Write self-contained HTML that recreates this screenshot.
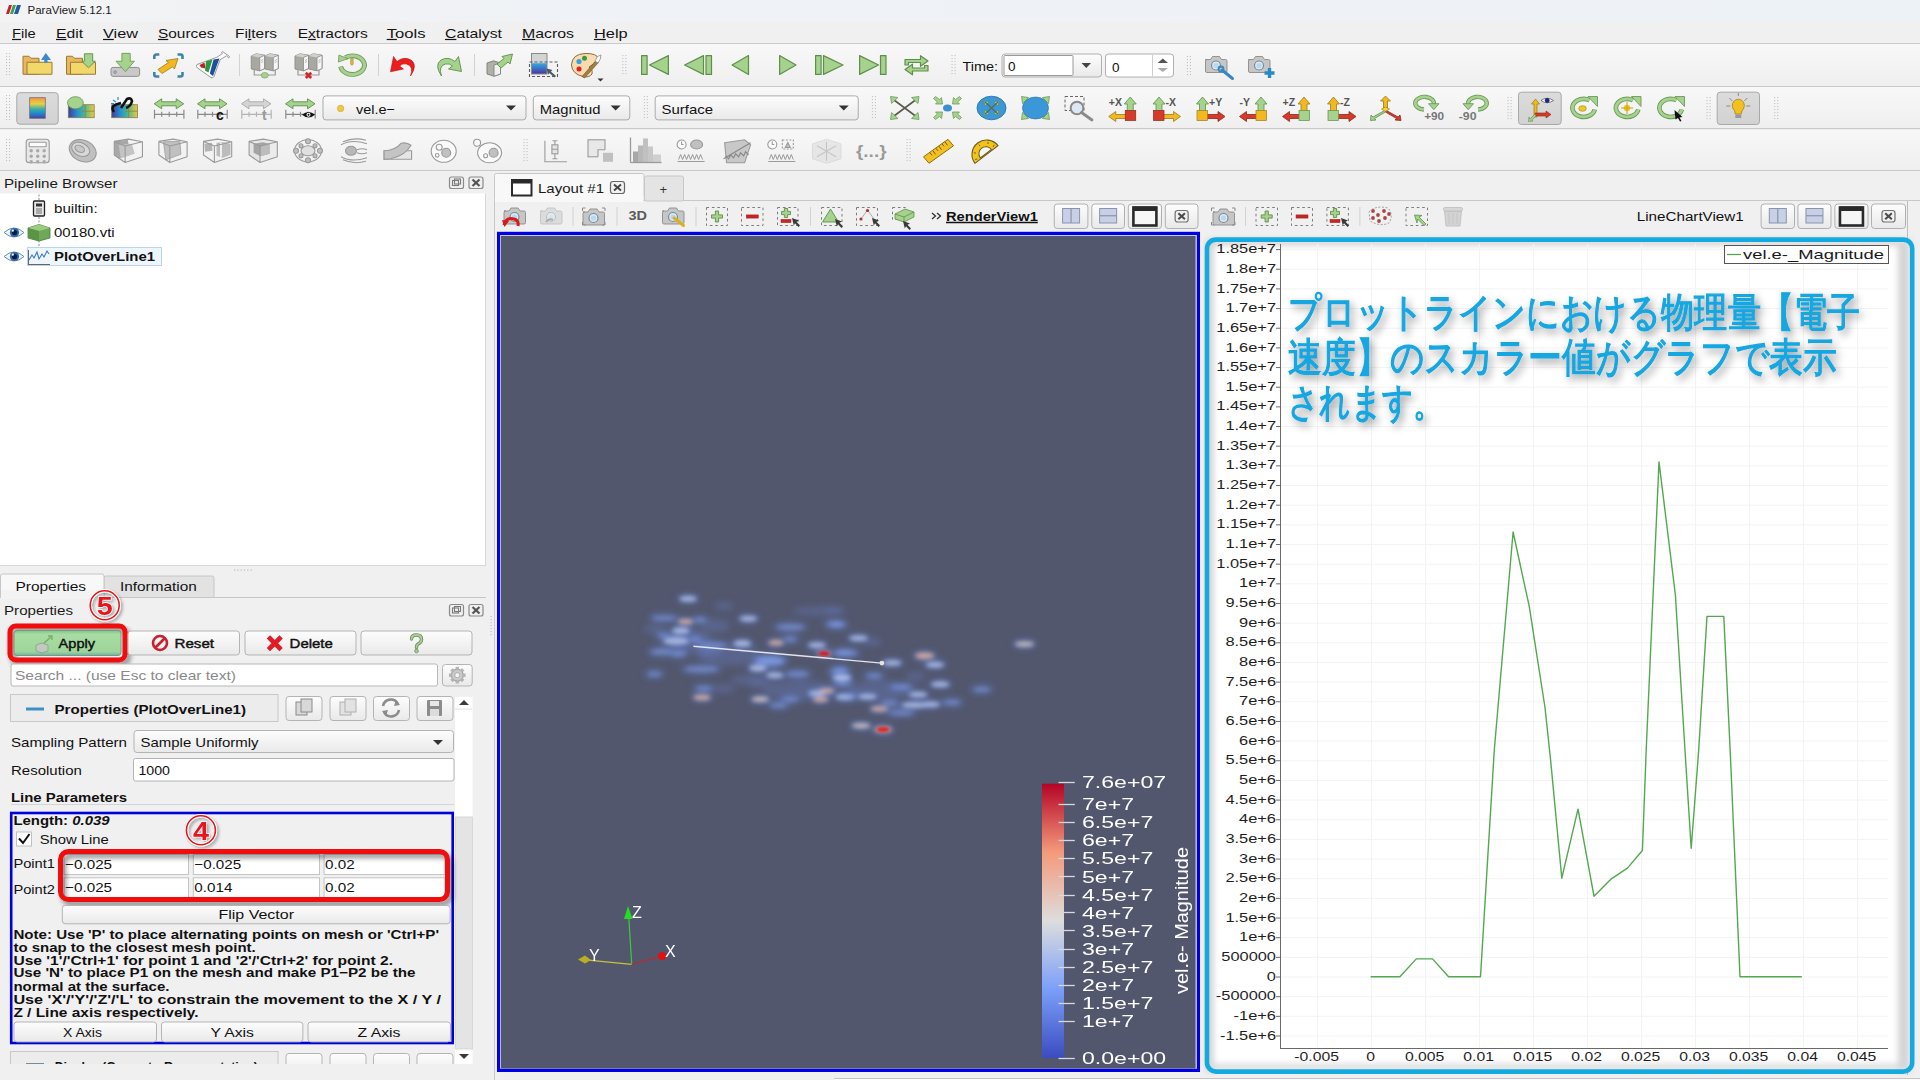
<!DOCTYPE html>
<html lang="ja"><head><meta charset="utf-8"><title>ParaView</title>
<style>html,body{margin:0;padding:0;width:1920px;height:1080px;overflow:hidden;background:#f0f0f0}
svg{display:block;font-family:"Liberation Sans", sans-serif}</style></head>
<body><svg width="1920" height="1080" viewBox="0 0 1920 1080">
<defs>
 <linearGradient id="tb" x1="0" y1="0" x2="0" y2="1"><stop offset="0" stop-color="#f8f8f8"/><stop offset="1" stop-color="#efefef"/></linearGradient>
 <linearGradient id="title" x1="0" y1="0" x2="1" y2="0"><stop offset="0" stop-color="#f3f3f4"/><stop offset="0.3" stop-color="#eff2f6"/><stop offset="1" stop-color="#edf2f7"/></linearGradient>
 <linearGradient id="btn" x1="0" y1="0" x2="0" y2="1"><stop offset="0" stop-color="#fdfdfd"/><stop offset="1" stop-color="#e9e9e9"/></linearGradient>
 <linearGradient id="btnact" x1="0" y1="0" x2="0" y2="1"><stop offset="0" stop-color="#dcdcdc"/><stop offset="1" stop-color="#d2d2d2"/></linearGradient>
 <linearGradient id="apply" x1="0" y1="0" x2="0" y2="1"><stop offset="0" stop-color="#7fc28a"/><stop offset="0.15" stop-color="#a8dca2"/><stop offset="0.85" stop-color="#9fd59a"/><stop offset="1" stop-color="#6eb0a8"/></linearGradient>
 <linearGradient id="cmap" x1="0" y1="1" x2="0" y2="0">
   <stop offset="0" stop-color="#3b4cc0"/><stop offset="0.25" stop-color="#7b9ff9"/><stop offset="0.5" stop-color="#dddddd"/><stop offset="0.75" stop-color="#f49a7b"/><stop offset="1" stop-color="#b40426"/>
 </linearGradient>
 <filter id="blur4" x="-50%" y="-50%" width="200%" height="200%"><feGaussianBlur stdDeviation="4"/></filter>
 <filter id="blur3" x="-50%" y="-50%" width="200%" height="200%"><feGaussianBlur stdDeviation="3"/></filter>
 <filter id="blur2" x="-50%" y="-50%" width="200%" height="200%"><feGaussianBlur stdDeviation="2"/></filter>
 <filter id="blur1" x="-50%" y="-50%" width="200%" height="200%"><feGaussianBlur stdDeviation="1"/></filter>
 <filter id="shadow" x="-10%" y="-10%" width="130%" height="140%"><feGaussianBlur in="SourceAlpha" stdDeviation="2.5"/><feOffset dx="3" dy="4" result="o"/><feComponentTransfer><feFuncA type="linear" slope="0.45"/></feComponentTransfer><feMerge><feMergeNode/><feMergeNode in="SourceGraphic"/></feMerge></filter>
 <filter id="shadow2" x="-30%" y="-30%" width="160%" height="160%"><feGaussianBlur in="SourceAlpha" stdDeviation="1.5"/><feOffset dx="1.5" dy="2" result="o"/><feComponentTransfer><feFuncA type="linear" slope="0.3"/></feComponentTransfer><feMerge><feMergeNode/><feMergeNode in="SourceGraphic"/></feMerge></filter>
 <filter id="shadowj" x="-10%" y="-30%" width="130%" height="170%"><feGaussianBlur in="SourceAlpha" stdDeviation="4"/><feOffset dx="3" dy="4" result="o"/><feComponentTransfer><feFuncA type="linear" slope="0.42"/></feComponentTransfer><feMerge><feMergeNode/><feMergeNode in="SourceGraphic"/></feMerge></filter>
 <filter id="ishadow" x="-5%" y="-5%" width="110%" height="110%"><feGaussianBlur stdDeviation="3"/></filter>
</defs>
<rect x="0" y="0" width="1920" height="1080" fill="#f0f0f0" /><rect x="0" y="0" width="1920" height="22" fill="url(#title)" /><g transform="translate(6,5)"><path d="M3 0h3l-3 9h-3z" fill="#c8202f"/><path d="M7 0h3l-3 9h-3z" fill="#3aa14a"/><path d="M11 0h4l-3 9h-4z" fill="#1f5aa8"/></g><text x="27.5" y="13.5" font-size="11.5" fill="#1a1a1a" textLength="84.14" lengthAdjust="spacingAndGlyphs" >ParaView 5.12.1</text><rect x="0" y="22" width="1920" height="22" fill="#f0f0f0" /><text x="12" y="37.5" font-size="13.5" fill="#141414" textLength="23.70" lengthAdjust="spacingAndGlyphs" >File</text><line x1="12" y1="39.5" x2="20.98320172290022" y2="39.5" stroke="#141414" stroke-width="1.2" /><text x="56" y="37.5" font-size="13.5" fill="#141414" textLength="27.00" lengthAdjust="spacingAndGlyphs" >Edit</text><line x1="56" y1="39.5" x2="66.44459368703828" y2="39.5" stroke="#141414" stroke-width="1.2" /><text x="103" y="37.5" font-size="13.5" fill="#141414" textLength="35.00" lengthAdjust="spacingAndGlyphs" >View</text><line x1="103" y1="39.5" x2="113.8562197092084" y2="39.5" stroke="#141414" stroke-width="1.2" /><text x="158" y="37.5" font-size="13.5" fill="#141414" textLength="56.50" lengthAdjust="spacingAndGlyphs" >Sources</text><line x1="158" y1="39.5" x2="168.26300851466414" y2="39.5" stroke="#141414" stroke-width="1.2" /><text x="235" y="37.5" font-size="13.5" fill="#141414" textLength="42.00" lengthAdjust="spacingAndGlyphs" >Filters</text><line x1="247.8516787080323" y1="39.5" x2="251.27879303017426" y2="39.5" stroke="#141414" stroke-width="1.2" /><text x="297.7" y="37.5" font-size="13.5" fill="#141414" textLength="70.10" lengthAdjust="spacingAndGlyphs" >Extractors</text><line x1="308.07984575835474" y1="39.5" x2="315.8647300771208" y2="39.5" stroke="#141414" stroke-width="1.2" /><text x="386.7" y="37.5" font-size="13.5" fill="#141414" textLength="38.90" lengthAdjust="spacingAndGlyphs" >Tools</text><line x1="386.7" y1="39.5" x2="396.87799801783945" y2="39.5" stroke="#141414" stroke-width="1.2" /><text x="445" y="37.5" font-size="13.5" fill="#141414" textLength="57.00" lengthAdjust="spacingAndGlyphs" >Catalyst</text><line x1="445" y1="39.5" x2="456.39269698910954" y2="39.5" stroke="#141414" stroke-width="1.2" /><text x="522" y="37.5" font-size="13.5" fill="#141414" textLength="52.00" lengthAdjust="spacingAndGlyphs" >Macros</text><line x1="522" y1="39.5" x2="535.2110091743119" y2="39.5" stroke="#141414" stroke-width="1.2" /><text x="594" y="37.5" font-size="13.5" fill="#141414" textLength="33.70" lengthAdjust="spacingAndGlyphs" >Help</text><line x1="594" y1="39.5" x2="605.8272215973003" y2="39.5" stroke="#141414" stroke-width="1.2" /><line x1="0" y1="43.5" x2="1920" y2="43.5" stroke="#cacaca" stroke-width="1" /><rect x="0" y="44" width="1920" height="42" fill="url(#tb)" /><rect x="0" y="87" width="1920" height="41.5" fill="url(#tb)" /><rect x="0" y="129" width="1920" height="41" fill="url(#tb)" /><line x1="0" y1="86.5" x2="1920" y2="86.5" stroke="#c9c9c9" stroke-width="1.2" /><line x1="0" y1="128.7" x2="1920" y2="128.7" stroke="#c9c9c9" stroke-width="1.2" /><line x1="0" y1="170.5" x2="1920" y2="170.5" stroke="#c9c9c9" stroke-width="1.2" /><text x="4" y="188" font-size="13.5" fill="#1a1a1a" textLength="113.51" lengthAdjust="spacingAndGlyphs" >Pipeline Browser</text><rect x="449.5" y="177" width="14" height="11.5" fill="#f0f0f0" stroke="#8a8a8a" stroke-width="1.2" rx="2" /><rect x="452.5" y="180.5" width="6" height="5" fill="none" stroke="#7a7a7a" stroke-width="1.1" /><rect x="454.5" y="179" width="6" height="5" fill="none" stroke="#7a7a7a" stroke-width="1.1" /><rect x="469" y="177" width="14" height="11.5" fill="#f0f0f0" stroke="#8a8a8a" stroke-width="1.2" rx="2" /><line x1="472.5" y1="179.5" x2="479.5" y2="186" stroke="#555" stroke-width="2.2" /><line x1="479.5" y1="179.5" x2="472.5" y2="186" stroke="#555" stroke-width="2.2" /><rect x="0" y="193.5" width="485" height="371.5" fill="#ffffff" /><line x1="485.5" y1="193.5" x2="485.5" y2="565" stroke="#d8d8d8" stroke-width="1" /><line x1="0" y1="565.5" x2="486" y2="565.5" stroke="#d8d8d8" stroke-width="1" /><rect x="234.0" y="569.5" width="1.2" height="1.2" fill="#b8b8b8" /><rect x="237.3" y="569.5" width="1.2" height="1.2" fill="#b8b8b8" /><rect x="240.6" y="569.5" width="1.2" height="1.2" fill="#b8b8b8" /><rect x="243.9" y="569.5" width="1.2" height="1.2" fill="#b8b8b8" /><rect x="247.2" y="569.5" width="1.2" height="1.2" fill="#b8b8b8" /><rect x="250.5" y="569.5" width="1.2" height="1.2" fill="#b8b8b8" /><line x1="0" y1="597.5" x2="486" y2="597.5" stroke="#c6c6c6" stroke-width="1" /><rect x="104" y="576" width="110" height="21.5" fill="#e2e2e2" stroke="#c6c6c6" stroke-width="1" rx="2" /><rect x="0.5" y="574" width="103.5" height="24" fill="#f8f8f8" stroke="#c6c6c6" stroke-width="1" rx="2" /><rect x="1" y="590" width="102" height="9" fill="#f3f3f3" /><text x="15.4" y="591" font-size="13" fill="#111" textLength="70.60" lengthAdjust="spacingAndGlyphs" >Properties</text><text x="120" y="591" font-size="13" fill="#111" textLength="76.70" lengthAdjust="spacingAndGlyphs" >Information</text><text x="4" y="615.4" font-size="13.5" fill="#1a1a1a" textLength="68.95" lengthAdjust="spacingAndGlyphs" >Properties</text><rect x="449.5" y="604.5" width="14" height="11.5" fill="#f0f0f0" stroke="#8a8a8a" stroke-width="1.2" rx="2" /><rect x="452.5" y="608.0" width="6" height="5" fill="none" stroke="#7a7a7a" stroke-width="1.1" /><rect x="454.5" y="606.5" width="6" height="5" fill="none" stroke="#7a7a7a" stroke-width="1.1" /><rect x="469" y="604.5" width="14" height="11.5" fill="#f0f0f0" stroke="#8a8a8a" stroke-width="1.2" rx="2" /><line x1="472.5" y1="607.0" x2="479.5" y2="613.5" stroke="#555" stroke-width="2.2" /><line x1="479.5" y1="607.0" x2="472.5" y2="613.5" stroke="#555" stroke-width="2.2" /><line x1="494" y1="200.5" x2="1920" y2="200.5" stroke="#c8c8c8" stroke-width="1" /><rect x="495" y="201" width="1425" height="879" fill="#f0f0f0" /><line x1="494.5" y1="201" x2="494.5" y2="1080" stroke="#c8c8c8" stroke-width="1" /><rect x="644.5" y="176" width="39" height="25" fill="#e4e4e4" stroke="#c8c8c8" stroke-width="1" rx="2" /><rect x="494.5" y="173.5" width="149.5" height="28" fill="#f8f8f8" stroke="#c8c8c8" stroke-width="1" rx="2" /><rect x="495" y="196" width="148.5" height="6" fill="#f8f8f8" /><rect x="512" y="180" width="19.5" height="15.5" fill="#ffffff" stroke="#2a2a2a" stroke-width="2" /><rect x="512" y="179.5" width="19.5" height="4" fill="#2a2a2a" /><text x="538" y="193" font-size="13.5" fill="#1a1a1a" textLength="66.00" lengthAdjust="spacingAndGlyphs" >Layout #1</text><rect x="610.5" y="181.5" width="14" height="12" fill="#f2f2f2" stroke="#666" stroke-width="1.2" rx="2.5" /><line x1="614" y1="184.5" x2="621" y2="190.5" stroke="#444" stroke-width="2" /><line x1="621" y1="184.5" x2="614" y2="190.5" stroke="#444" stroke-width="2" /><text x="659.5" y="194" font-size="13" fill="#333" >+</text><rect x="497" y="231.8" width="703" height="840.2" fill="#0000e6" /><rect x="500.2" y="235" width="696.6" height="833.8" fill="#e4e6f6" /><rect x="501" y="235.8" width="694.6" height="832.8" fill="#52576e" /><rect x="490.5" y="616" width="1.1" height="1.1" fill="#b8b8b8" /><rect x="490.5" y="619" width="1.1" height="1.1" fill="#b8b8b8" /><rect x="490.5" y="622" width="1.1" height="1.1" fill="#b8b8b8" /><rect x="490.5" y="625" width="1.1" height="1.1" fill="#b8b8b8" /><rect x="490.5" y="628" width="1.1" height="1.1" fill="#b8b8b8" /><rect x="490.5" y="631" width="1.1" height="1.1" fill="#b8b8b8" /><rect x="490.5" y="634" width="1.1" height="1.1" fill="#b8b8b8" /><line x1="1907.5" y1="201" x2="1907.5" y2="1075" stroke="#bcbcbc" stroke-width="1" /><line x1="834" y1="1078.5" x2="1920" y2="1078.5" stroke="#c4c4c4" stroke-width="1" /><rect x="834" y="1079" width="1086" height="1" fill="#fbfbfb" /><rect x="1209" y="241.5" width="702" height="828" fill="#ffffff" /><g filter="url(#ishadow)" opacity="0.55"><rect x="1207" y="240" width="6" height="832" fill="#9a9a9a" /><rect x="1207" y="240" width="704" height="5" fill="#9a9a9a" /><rect x="1898" y="240" width="12" height="832" fill="#b0b0b0" /><rect x="1207" y="1064" width="704" height="6" fill="#b8b8b8" /></g><line x1="1317.5" y1="244" x2="1317.5" y2="1048" stroke="#f3f3f3" stroke-width="1" /><line x1="1371.5" y1="244" x2="1371.5" y2="1048" stroke="#f3f3f3" stroke-width="1" /><line x1="1425.5" y1="244" x2="1425.5" y2="1048" stroke="#f3f3f3" stroke-width="1" /><line x1="1479.5" y1="244" x2="1479.5" y2="1048" stroke="#f3f3f3" stroke-width="1" /><line x1="1533.5" y1="244" x2="1533.5" y2="1048" stroke="#f3f3f3" stroke-width="1" /><line x1="1587.5" y1="244" x2="1587.5" y2="1048" stroke="#f3f3f3" stroke-width="1" /><line x1="1641.5" y1="244" x2="1641.5" y2="1048" stroke="#f3f3f3" stroke-width="1" /><line x1="1695.5" y1="244" x2="1695.5" y2="1048" stroke="#f3f3f3" stroke-width="1" /><line x1="1749.5" y1="244" x2="1749.5" y2="1048" stroke="#f3f3f3" stroke-width="1" /><line x1="1803.5" y1="244" x2="1803.5" y2="1048" stroke="#f3f3f3" stroke-width="1" /><line x1="1857.5" y1="244" x2="1857.5" y2="1048" stroke="#f3f3f3" stroke-width="1" /><line x1="1281" y1="249.6" x2="1888" y2="249.6" stroke="#f3f3f3" stroke-width="1" /><line x1="1281" y1="269.26" x2="1888" y2="269.26" stroke="#f3f3f3" stroke-width="1" /><line x1="1281" y1="288.92" x2="1888" y2="288.92" stroke="#f3f3f3" stroke-width="1" /><line x1="1281" y1="308.58" x2="1888" y2="308.58" stroke="#f3f3f3" stroke-width="1" /><line x1="1281" y1="328.24" x2="1888" y2="328.24" stroke="#f3f3f3" stroke-width="1" /><line x1="1281" y1="347.9" x2="1888" y2="347.9" stroke="#f3f3f3" stroke-width="1" /><line x1="1281" y1="367.56" x2="1888" y2="367.56" stroke="#f3f3f3" stroke-width="1" /><line x1="1281" y1="387.22" x2="1888" y2="387.22" stroke="#f3f3f3" stroke-width="1" /><line x1="1281" y1="406.88" x2="1888" y2="406.88" stroke="#f3f3f3" stroke-width="1" /><line x1="1281" y1="426.53999999999996" x2="1888" y2="426.53999999999996" stroke="#f3f3f3" stroke-width="1" /><line x1="1281" y1="446.2" x2="1888" y2="446.2" stroke="#f3f3f3" stroke-width="1" /><line x1="1281" y1="465.86" x2="1888" y2="465.86" stroke="#f3f3f3" stroke-width="1" /><line x1="1281" y1="485.52" x2="1888" y2="485.52" stroke="#f3f3f3" stroke-width="1" /><line x1="1281" y1="505.18" x2="1888" y2="505.18" stroke="#f3f3f3" stroke-width="1" /><line x1="1281" y1="524.84" x2="1888" y2="524.84" stroke="#f3f3f3" stroke-width="1" /><line x1="1281" y1="544.5" x2="1888" y2="544.5" stroke="#f3f3f3" stroke-width="1" /><line x1="1281" y1="564.16" x2="1888" y2="564.16" stroke="#f3f3f3" stroke-width="1" /><line x1="1281" y1="583.82" x2="1888" y2="583.82" stroke="#f3f3f3" stroke-width="1" /><line x1="1281" y1="603.48" x2="1888" y2="603.48" stroke="#f3f3f3" stroke-width="1" /><line x1="1281" y1="623.14" x2="1888" y2="623.14" stroke="#f3f3f3" stroke-width="1" /><line x1="1281" y1="642.8" x2="1888" y2="642.8" stroke="#f3f3f3" stroke-width="1" /><line x1="1281" y1="662.46" x2="1888" y2="662.46" stroke="#f3f3f3" stroke-width="1" /><line x1="1281" y1="682.12" x2="1888" y2="682.12" stroke="#f3f3f3" stroke-width="1" /><line x1="1281" y1="701.78" x2="1888" y2="701.78" stroke="#f3f3f3" stroke-width="1" /><line x1="1281" y1="721.44" x2="1888" y2="721.44" stroke="#f3f3f3" stroke-width="1" /><line x1="1281" y1="741.1" x2="1888" y2="741.1" stroke="#f3f3f3" stroke-width="1" /><line x1="1281" y1="760.76" x2="1888" y2="760.76" stroke="#f3f3f3" stroke-width="1" /><line x1="1281" y1="780.4200000000001" x2="1888" y2="780.4200000000001" stroke="#f3f3f3" stroke-width="1" /><line x1="1281" y1="800.08" x2="1888" y2="800.08" stroke="#f3f3f3" stroke-width="1" /><line x1="1281" y1="819.74" x2="1888" y2="819.74" stroke="#f3f3f3" stroke-width="1" /><line x1="1281" y1="839.4" x2="1888" y2="839.4" stroke="#f3f3f3" stroke-width="1" /><line x1="1281" y1="859.0600000000001" x2="1888" y2="859.0600000000001" stroke="#f3f3f3" stroke-width="1" /><line x1="1281" y1="878.72" x2="1888" y2="878.72" stroke="#f3f3f3" stroke-width="1" /><line x1="1281" y1="898.38" x2="1888" y2="898.38" stroke="#f3f3f3" stroke-width="1" /><line x1="1281" y1="918.0400000000001" x2="1888" y2="918.0400000000001" stroke="#f3f3f3" stroke-width="1" /><line x1="1281" y1="937.7" x2="1888" y2="937.7" stroke="#f3f3f3" stroke-width="1" /><line x1="1281" y1="957.36" x2="1888" y2="957.36" stroke="#f3f3f3" stroke-width="1" /><line x1="1281" y1="977.02" x2="1888" y2="977.02" stroke="#f3f3f3" stroke-width="1" /><line x1="1281" y1="996.6800000000001" x2="1888" y2="996.6800000000001" stroke="#f3f3f3" stroke-width="1" /><line x1="1281" y1="1016.34" x2="1888" y2="1016.34" stroke="#f3f3f3" stroke-width="1" /><line x1="1281" y1="1036.0" x2="1888" y2="1036.0" stroke="#f3f3f3" stroke-width="1" /><line x1="1280.5" y1="244" x2="1280.5" y2="1049" stroke="#6a6a6a" stroke-width="1" /><line x1="1280" y1="1048.5" x2="1888" y2="1048.5" stroke="#6a6a6a" stroke-width="1" /><line x1="1276" y1="249.6" x2="1280" y2="249.6" stroke="#6a6a6a" stroke-width="1" /><text x="1216.3075" y="253.2" font-size="13" fill="#1e1e1e" textLength="59.69" lengthAdjust="spacingAndGlyphs" >1.85e+7</text><line x1="1276" y1="269.26" x2="1280" y2="269.26" stroke="#6a6a6a" stroke-width="1" /><text x="1225.4228125" y="272.86" font-size="13" fill="#1e1e1e" textLength="50.58" lengthAdjust="spacingAndGlyphs" >1.8e+7</text><line x1="1276" y1="288.92" x2="1280" y2="288.92" stroke="#6a6a6a" stroke-width="1" /><text x="1216.3075" y="292.52000000000004" font-size="13" fill="#1e1e1e" textLength="59.69" lengthAdjust="spacingAndGlyphs" >1.75e+7</text><line x1="1276" y1="308.58" x2="1280" y2="308.58" stroke="#6a6a6a" stroke-width="1" /><text x="1225.4228125" y="312.18" font-size="13" fill="#1e1e1e" textLength="50.58" lengthAdjust="spacingAndGlyphs" >1.7e+7</text><line x1="1276" y1="328.24" x2="1280" y2="328.24" stroke="#6a6a6a" stroke-width="1" /><text x="1216.3075" y="331.84000000000003" font-size="13" fill="#1e1e1e" textLength="59.69" lengthAdjust="spacingAndGlyphs" >1.65e+7</text><line x1="1276" y1="347.9" x2="1280" y2="347.9" stroke="#6a6a6a" stroke-width="1" /><text x="1225.4228125" y="351.5" font-size="13" fill="#1e1e1e" textLength="50.58" lengthAdjust="spacingAndGlyphs" >1.6e+7</text><line x1="1276" y1="367.56" x2="1280" y2="367.56" stroke="#6a6a6a" stroke-width="1" /><text x="1216.3075" y="371.16" font-size="13" fill="#1e1e1e" textLength="59.69" lengthAdjust="spacingAndGlyphs" >1.55e+7</text><line x1="1276" y1="387.22" x2="1280" y2="387.22" stroke="#6a6a6a" stroke-width="1" /><text x="1225.4228125" y="390.82000000000005" font-size="13" fill="#1e1e1e" textLength="50.58" lengthAdjust="spacingAndGlyphs" >1.5e+7</text><line x1="1276" y1="406.88" x2="1280" y2="406.88" stroke="#6a6a6a" stroke-width="1" /><text x="1216.3075" y="410.48" font-size="13" fill="#1e1e1e" textLength="59.69" lengthAdjust="spacingAndGlyphs" >1.45e+7</text><line x1="1276" y1="426.53999999999996" x2="1280" y2="426.53999999999996" stroke="#6a6a6a" stroke-width="1" /><text x="1225.4228125" y="430.14" font-size="13" fill="#1e1e1e" textLength="50.58" lengthAdjust="spacingAndGlyphs" >1.4e+7</text><line x1="1276" y1="446.2" x2="1280" y2="446.2" stroke="#6a6a6a" stroke-width="1" /><text x="1216.3075" y="449.8" font-size="13" fill="#1e1e1e" textLength="59.69" lengthAdjust="spacingAndGlyphs" >1.35e+7</text><line x1="1276" y1="465.86" x2="1280" y2="465.86" stroke="#6a6a6a" stroke-width="1" /><text x="1225.4228125" y="469.46000000000004" font-size="13" fill="#1e1e1e" textLength="50.58" lengthAdjust="spacingAndGlyphs" >1.3e+7</text><line x1="1276" y1="485.52" x2="1280" y2="485.52" stroke="#6a6a6a" stroke-width="1" /><text x="1216.3075" y="489.12" font-size="13" fill="#1e1e1e" textLength="59.69" lengthAdjust="spacingAndGlyphs" >1.25e+7</text><line x1="1276" y1="505.18" x2="1280" y2="505.18" stroke="#6a6a6a" stroke-width="1" /><text x="1225.4228125" y="508.78000000000003" font-size="13" fill="#1e1e1e" textLength="50.58" lengthAdjust="spacingAndGlyphs" >1.2e+7</text><line x1="1276" y1="524.84" x2="1280" y2="524.84" stroke="#6a6a6a" stroke-width="1" /><text x="1216.3075" y="528.44" font-size="13" fill="#1e1e1e" textLength="59.69" lengthAdjust="spacingAndGlyphs" >1.15e+7</text><line x1="1276" y1="544.5" x2="1280" y2="544.5" stroke="#6a6a6a" stroke-width="1" /><text x="1225.4228125" y="548.1" font-size="13" fill="#1e1e1e" textLength="50.58" lengthAdjust="spacingAndGlyphs" >1.1e+7</text><line x1="1276" y1="564.16" x2="1280" y2="564.16" stroke="#6a6a6a" stroke-width="1" /><text x="1216.3075" y="567.76" font-size="13" fill="#1e1e1e" textLength="59.69" lengthAdjust="spacingAndGlyphs" >1.05e+7</text><line x1="1276" y1="583.82" x2="1280" y2="583.82" stroke="#6a6a6a" stroke-width="1" /><text x="1239.0859375" y="587.4200000000001" font-size="13" fill="#1e1e1e" textLength="36.91" lengthAdjust="spacingAndGlyphs" >1e+7</text><line x1="1276" y1="603.48" x2="1280" y2="603.48" stroke="#6a6a6a" stroke-width="1" /><text x="1225.4228125" y="607.08" font-size="13" fill="#1e1e1e" textLength="50.58" lengthAdjust="spacingAndGlyphs" >9.5e+6</text><line x1="1276" y1="623.14" x2="1280" y2="623.14" stroke="#6a6a6a" stroke-width="1" /><text x="1239.0859375" y="626.74" font-size="13" fill="#1e1e1e" textLength="36.91" lengthAdjust="spacingAndGlyphs" >9e+6</text><line x1="1276" y1="642.8" x2="1280" y2="642.8" stroke="#6a6a6a" stroke-width="1" /><text x="1225.4228125" y="646.4" font-size="13" fill="#1e1e1e" textLength="50.58" lengthAdjust="spacingAndGlyphs" >8.5e+6</text><line x1="1276" y1="662.46" x2="1280" y2="662.46" stroke="#6a6a6a" stroke-width="1" /><text x="1239.0859375" y="666.0600000000001" font-size="13" fill="#1e1e1e" textLength="36.91" lengthAdjust="spacingAndGlyphs" >8e+6</text><line x1="1276" y1="682.12" x2="1280" y2="682.12" stroke="#6a6a6a" stroke-width="1" /><text x="1225.4228125" y="685.72" font-size="13" fill="#1e1e1e" textLength="50.58" lengthAdjust="spacingAndGlyphs" >7.5e+6</text><line x1="1276" y1="701.78" x2="1280" y2="701.78" stroke="#6a6a6a" stroke-width="1" /><text x="1239.0859375" y="705.38" font-size="13" fill="#1e1e1e" textLength="36.91" lengthAdjust="spacingAndGlyphs" >7e+6</text><line x1="1276" y1="721.44" x2="1280" y2="721.44" stroke="#6a6a6a" stroke-width="1" /><text x="1225.4228125" y="725.0400000000001" font-size="13" fill="#1e1e1e" textLength="50.58" lengthAdjust="spacingAndGlyphs" >6.5e+6</text><line x1="1276" y1="741.1" x2="1280" y2="741.1" stroke="#6a6a6a" stroke-width="1" /><text x="1239.0859375" y="744.7" font-size="13" fill="#1e1e1e" textLength="36.91" lengthAdjust="spacingAndGlyphs" >6e+6</text><line x1="1276" y1="760.76" x2="1280" y2="760.76" stroke="#6a6a6a" stroke-width="1" /><text x="1225.4228125" y="764.36" font-size="13" fill="#1e1e1e" textLength="50.58" lengthAdjust="spacingAndGlyphs" >5.5e+6</text><line x1="1276" y1="780.4200000000001" x2="1280" y2="780.4200000000001" stroke="#6a6a6a" stroke-width="1" /><text x="1239.0859375" y="784.0200000000001" font-size="13" fill="#1e1e1e" textLength="36.91" lengthAdjust="spacingAndGlyphs" >5e+6</text><line x1="1276" y1="800.08" x2="1280" y2="800.08" stroke="#6a6a6a" stroke-width="1" /><text x="1225.4228125" y="803.6800000000001" font-size="13" fill="#1e1e1e" textLength="50.58" lengthAdjust="spacingAndGlyphs" >4.5e+6</text><line x1="1276" y1="819.74" x2="1280" y2="819.74" stroke="#6a6a6a" stroke-width="1" /><text x="1239.0859375" y="823.34" font-size="13" fill="#1e1e1e" textLength="36.91" lengthAdjust="spacingAndGlyphs" >4e+6</text><line x1="1276" y1="839.4" x2="1280" y2="839.4" stroke="#6a6a6a" stroke-width="1" /><text x="1225.4228125" y="843.0" font-size="13" fill="#1e1e1e" textLength="50.58" lengthAdjust="spacingAndGlyphs" >3.5e+6</text><line x1="1276" y1="859.0600000000001" x2="1280" y2="859.0600000000001" stroke="#6a6a6a" stroke-width="1" /><text x="1239.0859375" y="862.6600000000001" font-size="13" fill="#1e1e1e" textLength="36.91" lengthAdjust="spacingAndGlyphs" >3e+6</text><line x1="1276" y1="878.72" x2="1280" y2="878.72" stroke="#6a6a6a" stroke-width="1" /><text x="1225.4228125" y="882.32" font-size="13" fill="#1e1e1e" textLength="50.58" lengthAdjust="spacingAndGlyphs" >2.5e+6</text><line x1="1276" y1="898.38" x2="1280" y2="898.38" stroke="#6a6a6a" stroke-width="1" /><text x="1239.0859375" y="901.98" font-size="13" fill="#1e1e1e" textLength="36.91" lengthAdjust="spacingAndGlyphs" >2e+6</text><line x1="1276" y1="918.0400000000001" x2="1280" y2="918.0400000000001" stroke="#6a6a6a" stroke-width="1" /><text x="1225.4228125" y="921.6400000000001" font-size="13" fill="#1e1e1e" textLength="50.58" lengthAdjust="spacingAndGlyphs" >1.5e+6</text><line x1="1276" y1="937.7" x2="1280" y2="937.7" stroke="#6a6a6a" stroke-width="1" /><text x="1239.0859375" y="941.3000000000001" font-size="13" fill="#1e1e1e" textLength="36.91" lengthAdjust="spacingAndGlyphs" >1e+6</text><line x1="1276" y1="957.36" x2="1280" y2="957.36" stroke="#6a6a6a" stroke-width="1" /><text x="1221.308125" y="960.96" font-size="13" fill="#1e1e1e" textLength="54.69" lengthAdjust="spacingAndGlyphs" >500000</text><line x1="1276" y1="977.02" x2="1280" y2="977.02" stroke="#6a6a6a" stroke-width="1" /><text x="1266.8846875" y="980.62" font-size="13" fill="#1e1e1e" textLength="9.12" lengthAdjust="spacingAndGlyphs" >0</text><line x1="1276" y1="996.6800000000001" x2="1280" y2="996.6800000000001" stroke="#6a6a6a" stroke-width="1" /><text x="1215.8546875" y="1000.2800000000001" font-size="13" fill="#1e1e1e" textLength="60.15" lengthAdjust="spacingAndGlyphs" >-500000</text><line x1="1276" y1="1016.34" x2="1280" y2="1016.34" stroke="#6a6a6a" stroke-width="1" /><text x="1233.6325" y="1019.94" font-size="13" fill="#1e1e1e" textLength="42.37" lengthAdjust="spacingAndGlyphs" >-1e+6</text><line x1="1276" y1="1036.0" x2="1280" y2="1036.0" stroke="#6a6a6a" stroke-width="1" /><text x="1219.969375" y="1039.6" font-size="13" fill="#1e1e1e" textLength="56.03" lengthAdjust="spacingAndGlyphs" >-1.5e+6</text><text x="1294.2906249999999" y="1061" font-size="13" fill="#1e1e1e" textLength="44.62" lengthAdjust="spacingAndGlyphs" >-0.005</text><text x="1366.2232031249998" y="1061" font-size="13" fill="#1e1e1e" textLength="8.75" lengthAdjust="spacingAndGlyphs" >0</text><text x="1404.909140625" y="1061" font-size="13" fill="#1e1e1e" textLength="39.38" lengthAdjust="spacingAndGlyphs" >0.005</text><text x="1463.2859374999998" y="1061" font-size="13" fill="#1e1e1e" textLength="30.63" lengthAdjust="spacingAndGlyphs" >0.01</text><text x="1512.909140625" y="1061" font-size="13" fill="#1e1e1e" textLength="39.38" lengthAdjust="spacingAndGlyphs" >0.015</text><text x="1571.2859374999998" y="1061" font-size="13" fill="#1e1e1e" textLength="30.63" lengthAdjust="spacingAndGlyphs" >0.02</text><text x="1620.909140625" y="1061" font-size="13" fill="#1e1e1e" textLength="39.38" lengthAdjust="spacingAndGlyphs" >0.025</text><text x="1679.2859374999998" y="1061" font-size="13" fill="#1e1e1e" textLength="30.63" lengthAdjust="spacingAndGlyphs" >0.03</text><text x="1728.909140625" y="1061" font-size="13" fill="#1e1e1e" textLength="39.38" lengthAdjust="spacingAndGlyphs" >0.035</text><text x="1787.2859374999998" y="1061" font-size="13" fill="#1e1e1e" textLength="30.63" lengthAdjust="spacingAndGlyphs" >0.04</text><text x="1836.909140625" y="1061" font-size="13" fill="#1e1e1e" textLength="39.38" lengthAdjust="spacingAndGlyphs" >0.045</text><rect x="1724.5" y="245.5" width="164" height="18" fill="#ffffff" stroke="#555" stroke-width="1" /><line x1="1727" y1="254.5" x2="1741" y2="254.5" stroke="#4ea64b" stroke-width="1.2" /><text x="1743" y="259" font-size="13" fill="#1a1a1a" textLength="141.00" lengthAdjust="spacingAndGlyphs" >vel.e-_Magnitude</text><path d="M1370.6 976.8 L1399.9 976.8 L1416.3 958.9 L1432.5 958.9 L1448.6 976.8 L1480.5 976.8 L1494.3 750.0 L1513.1 532.0 L1529.2 606.2 L1545.0 707.5 L1550.6 760.0 L1561.8 878.2 L1578.0 809.2 L1594.0 896.2 L1610.6 879.4 L1627.4 868.1 L1642.4 850.5 L1646.2 750.0 L1659.0 461.9 L1675.4 595.0 L1685.6 760.0 L1691.2 848.2 L1698.7 750.0 L1707.0 616.4 L1723.8 616.4 L1730.6 760.0 L1740.0 976.8 L1801.8 976.8" fill="none" stroke="#52a84e" stroke-width="1.4" stroke-linejoin="round"/><rect x="1207" y="239.6" width="705.2" height="832" fill="none" stroke="#15a9e1" stroke-width="4.6" rx="9" /><text x="1288" y="326" font-size="40" textLength="572" lengthAdjust="spacingAndGlyphs" fill="#18a6e0" stroke="#18a6e0" stroke-width="1.3" filter="url(#shadowj)">プロットラインにおける物理量【電子</text><text x="1288" y="371" font-size="40" textLength="549" lengthAdjust="spacingAndGlyphs" fill="#18a6e0" stroke="#18a6e0" stroke-width="1.3" filter="url(#shadowj)">速度】のスカラー値がグラフで表示</text><text x="1288" y="416" font-size="40" textLength="156" lengthAdjust="spacingAndGlyphs" fill="#18a6e0" stroke="#18a6e0" stroke-width="1.3" filter="url(#shadowj)">されます。</text><g filter="url(#blur3)"><ellipse cx="688.1" cy="598.8" rx="11.0" ry="4.5" fill="#6a86d6" opacity="0.55"/><ellipse cx="724.2" cy="606" rx="10.5" ry="4.0" fill="#6a86d6" opacity="0.28"/><ellipse cx="816.9" cy="610.9" rx="25.0" ry="4.5" fill="#6a86d6" opacity="0.28"/><ellipse cx="664" cy="618" rx="15.0" ry="4.5" fill="#6a86d6" opacity="0.55"/><ellipse cx="685.7" cy="621.7" rx="10.0" ry="4.5" fill="#6a86d6" opacity="0.55"/><ellipse cx="700.2" cy="619.9" rx="9.0" ry="4.5" fill="#6a86d6" opacity="0.55"/><ellipse cx="715.8" cy="625.9" rx="14.0" ry="7.0" fill="#6a86d6" opacity="0.28"/><ellipse cx="748.3" cy="618.7" rx="11.0" ry="4.5" fill="#6a86d6" opacity="0.55"/><ellipse cx="790.4" cy="627.1" rx="17.0" ry="5.0" fill="#6a86d6" opacity="0.55"/><ellipse cx="834.9" cy="624.1" rx="11.5" ry="4.5" fill="#6a86d6" opacity="0.55"/><ellipse cx="654.4" cy="628.9" rx="11.0" ry="4.5" fill="#6a86d6" opacity="0.28"/><ellipse cx="680.9" cy="630.7" rx="11.0" ry="5.0" fill="#6a86d6" opacity="0.55"/><ellipse cx="664" cy="635.5" rx="9.0" ry="4.5" fill="#6a86d6" opacity="0.55"/><ellipse cx="676.1" cy="641" rx="15.0" ry="5.5" fill="#6a86d6" opacity="0.55"/><ellipse cx="695.4" cy="639.2" rx="9.0" ry="4.5" fill="#6a86d6" opacity="0.55"/><ellipse cx="712.2" cy="645.2" rx="17.0" ry="5.0" fill="#6a86d6" opacity="0.55"/><ellipse cx="742.3" cy="643.4" rx="11.0" ry="5.0" fill="#6a86d6" opacity="0.55"/><ellipse cx="776" cy="642.8" rx="10.0" ry="4.5" fill="#6a86d6" opacity="0.55"/><ellipse cx="790.4" cy="639.2" rx="9.0" ry="4.5" fill="#6a86d6" opacity="0.55"/><ellipse cx="816.9" cy="645.2" rx="11.0" ry="4.5" fill="#6a86d6" opacity="0.55"/><ellipse cx="824.1" cy="653.6" rx="9.0" ry="4.25" fill="#6a86d6" opacity="0.55"/><ellipse cx="661.7" cy="651.8" rx="14.0" ry="5.0" fill="#6a86d6" opacity="0.55"/><ellipse cx="678.5" cy="653.6" rx="11.0" ry="5.0" fill="#6a86d6" opacity="0.55"/><ellipse cx="706.2" cy="652.4" rx="14.0" ry="5.0" fill="#6a86d6" opacity="0.28"/><ellipse cx="770" cy="660.8" rx="17.0" ry="6.5" fill="#7494ec" opacity="0.7"/><ellipse cx="844.6" cy="652.4" rx="11.0" ry="4.5" fill="#6a86d6" opacity="0.55"/><ellipse cx="654.4" cy="674" rx="10.0" ry="4.5" fill="#6a86d6" opacity="0.55"/><ellipse cx="701.4" cy="669.2" rx="20.0" ry="5.0" fill="#6a86d6" opacity="0.55"/><ellipse cx="757.9" cy="668" rx="11.0" ry="5.0" fill="#6a86d6" opacity="0.55"/><ellipse cx="774.8" cy="675.3" rx="11.0" ry="4.5" fill="#6a86d6" opacity="0.55"/><ellipse cx="797.6" cy="674" rx="14.0" ry="5.0" fill="#6a86d6" opacity="0.55"/><ellipse cx="838.6" cy="671.6" rx="11.0" ry="4.5" fill="#6a86d6" opacity="0.55"/><ellipse cx="748.3" cy="680" rx="17.0" ry="5.0" fill="#6a86d6" opacity="0.28"/><ellipse cx="760.3" cy="683.7" rx="11.0" ry="4.5" fill="#6a86d6" opacity="0.28"/><ellipse cx="703.8" cy="688.5" rx="11.0" ry="4.5" fill="#6a86d6" opacity="0.55"/><ellipse cx="724.2" cy="688.5" rx="11.0" ry="4.5" fill="#6a86d6" opacity="0.28"/><ellipse cx="702" cy="697.5" rx="11.0" ry="4.5" fill="#6a86d6" opacity="0.55"/><ellipse cx="760.3" cy="699.3" rx="11.0" ry="4.5" fill="#6a86d6" opacity="0.55"/><ellipse cx="790.4" cy="699.3" rx="11.0" ry="4.5" fill="#6a86d6" opacity="0.55"/><ellipse cx="778.4" cy="705.3" rx="11.0" ry="4.5" fill="#6a86d6" opacity="0.55"/><ellipse cx="816.9" cy="693.3" rx="11.0" ry="4.5" fill="#6a86d6" opacity="0.55"/><ellipse cx="826.5" cy="690.9" rx="10.0" ry="4.5" fill="#6a86d6" opacity="0.55"/><ellipse cx="820.5" cy="699.3" rx="10.0" ry="4.5" fill="#6a86d6" opacity="0.55"/><ellipse cx="844.6" cy="697" rx="11.0" ry="4.5" fill="#6a86d6" opacity="0.55"/><ellipse cx="842.2" cy="677.7" rx="11.0" ry="4.5" fill="#6a86d6" opacity="0.55"/><ellipse cx="835.2" cy="610.4" rx="10.0" ry="4.0" fill="#6a86d6" opacity="0.28"/><ellipse cx="837.8" cy="624.6" rx="10.5" ry="4.5" fill="#6a86d6" opacity="0.55"/><ellipse cx="858.5" cy="638.2" rx="11.5" ry="4.5" fill="#6a86d6" opacity="0.55"/><ellipse cx="872.8" cy="642.1" rx="9.0" ry="4.0" fill="#6a86d6" opacity="0.28"/><ellipse cx="845.6" cy="653.2" rx="15.0" ry="4.5" fill="#6a86d6" opacity="0.55"/><ellipse cx="892.2" cy="662.9" rx="11.5" ry="4.5" fill="#6a86d6" opacity="0.55"/><ellipse cx="924.6" cy="655.7" rx="12.0" ry="5.0" fill="#6a86d6" opacity="0.55"/><ellipse cx="935" cy="664.8" rx="11.5" ry="4.5" fill="#6a86d6" opacity="0.55"/><ellipse cx="1024.5" cy="644.1" rx="12.0" ry="4.5" fill="#6a86d6" opacity="0.55"/><ellipse cx="840.4" cy="670" rx="10.0" ry="4.5" fill="#6a86d6" opacity="0.55"/><ellipse cx="874.1" cy="675.8" rx="11.0" ry="4.5" fill="#6a86d6" opacity="0.55"/><ellipse cx="841.7" cy="677.8" rx="11.0" ry="4.5" fill="#6a86d6" opacity="0.55"/><ellipse cx="843" cy="683.6" rx="11.0" ry="4.5" fill="#6a86d6" opacity="0.55"/><ellipse cx="915.6" cy="676.5" rx="10.0" ry="4.5" fill="#6a86d6" opacity="0.28"/><ellipse cx="940.2" cy="684.3" rx="11.5" ry="4.5" fill="#6a86d6" opacity="0.55"/><ellipse cx="901.3" cy="686.9" rx="13.5" ry="4.5" fill="#6a86d6" opacity="0.55"/><ellipse cx="981.7" cy="689.4" rx="11.5" ry="4.5" fill="#6a86d6" opacity="0.55"/><ellipse cx="918.2" cy="694.6" rx="11.5" ry="4.5" fill="#6a86d6" opacity="0.55"/><ellipse cx="849.4" cy="696.6" rx="11.5" ry="4.5" fill="#6a86d6" opacity="0.55"/><ellipse cx="867.6" cy="696.6" rx="11.5" ry="4.5" fill="#6a86d6" opacity="0.55"/><ellipse cx="889.6" cy="703.1" rx="11.0" ry="4.5" fill="#6a86d6" opacity="0.55"/><ellipse cx="914.3" cy="705" rx="15.0" ry="4.5" fill="#6a86d6" opacity="0.55"/><ellipse cx="931.1" cy="704.4" rx="11.0" ry="4.5" fill="#6a86d6" opacity="0.55"/><ellipse cx="951.9" cy="702.4" rx="11.5" ry="4.5" fill="#6a86d6" opacity="0.55"/><ellipse cx="879.3" cy="708.9" rx="11.0" ry="4.5" fill="#6a86d6" opacity="0.55"/><ellipse cx="901.3" cy="712.8" rx="15.0" ry="4.5" fill="#6a86d6" opacity="0.55"/><ellipse cx="861.1" cy="725.7" rx="11.5" ry="4.5" fill="#6a86d6" opacity="0.55"/><ellipse cx="883.1" cy="729.6" rx="11.5" ry="5.0" fill="#6a86d6" opacity="0.55"/><ellipse cx="730" cy="655" rx="32.0" ry="10.5" fill="#6a86d6" opacity="0.28"/><ellipse cx="800" cy="690" rx="37.0" ry="9.5" fill="#6a86d6" opacity="0.28"/><ellipse cx="690" cy="640" rx="22.0" ry="11.5" fill="#6a86d6" opacity="0.28"/><ellipse cx="880" cy="690" rx="32.0" ry="9.5" fill="#6a86d6" opacity="0.28"/></g><g filter="url(#blur2)"><ellipse cx="688.1" cy="598.8" rx="8.5" ry="2.7" fill="#b4c2ea" opacity="0.8"/><ellipse cx="664" cy="618" rx="11.0" ry="1.8" fill="#8aa2e6" opacity="0.45"/><ellipse cx="685.7" cy="621.7" rx="7.5" ry="2.7" fill="#e4b09c" opacity="0.8"/><ellipse cx="700.2" cy="619.9" rx="5.0" ry="1.8" fill="#8aa2e6" opacity="0.45"/><ellipse cx="748.3" cy="618.7" rx="8.5" ry="2.7" fill="#b4c2ea" opacity="0.8"/><ellipse cx="790.4" cy="627.1" rx="13.0" ry="2.3" fill="#8aa2e6" opacity="0.45"/><ellipse cx="834.9" cy="624.1" rx="7.5" ry="1.8" fill="#8aa2e6" opacity="0.45"/><ellipse cx="680.9" cy="630.7" rx="8.5" ry="3.2" fill="#b4c2ea" opacity="0.8"/><ellipse cx="664" cy="635.5" rx="5.0" ry="1.8" fill="#8aa2e6" opacity="0.45"/><ellipse cx="676.1" cy="641" rx="12.5" ry="3.7" fill="#b4c2ea" opacity="0.8"/><ellipse cx="695.4" cy="639.2" rx="5.0" ry="1.8" fill="#8aa2e6" opacity="0.45"/><ellipse cx="712.2" cy="645.2" rx="13.0" ry="2.3" fill="#8aa2e6" opacity="0.45"/><ellipse cx="742.3" cy="643.4" rx="8.5" ry="3.2" fill="#b4c2ea" opacity="0.8"/><ellipse cx="776" cy="642.8" rx="7.5" ry="2.7" fill="#e4b09c" opacity="0.8"/><ellipse cx="790.4" cy="639.2" rx="5.0" ry="1.8" fill="#8aa2e6" opacity="0.45"/><ellipse cx="816.9" cy="645.2" rx="8.5" ry="2.7" fill="#b4c2ea" opacity="0.8"/><ellipse cx="824.1" cy="653.6" rx="6.5" ry="2.45" fill="#e0a090" opacity="0.8"/><ellipse cx="661.7" cy="651.8" rx="10.0" ry="2.3" fill="#8aa2e6" opacity="0.45"/><ellipse cx="678.5" cy="653.6" rx="7.0" ry="2.3" fill="#8aa2e6" opacity="0.45"/><ellipse cx="770" cy="660.8" rx="13.0" ry="3.8" fill="#8eaaf4" opacity="0.45"/><ellipse cx="844.6" cy="652.4" rx="7.0" ry="1.8" fill="#8aa2e6" opacity="0.45"/><ellipse cx="654.4" cy="674" rx="6.0" ry="1.8" fill="#8aa2e6" opacity="0.45"/><ellipse cx="701.4" cy="669.2" rx="16.0" ry="2.3" fill="#8aa2e6" opacity="0.45"/><ellipse cx="757.9" cy="668" rx="8.5" ry="3.2" fill="#b4c2ea" opacity="0.8"/><ellipse cx="774.8" cy="675.3" rx="8.5" ry="2.7" fill="#b4c2ea" opacity="0.8"/><ellipse cx="797.6" cy="674" rx="10.0" ry="2.3" fill="#8aa2e6" opacity="0.45"/><ellipse cx="838.6" cy="671.6" rx="7.0" ry="1.8" fill="#8aa2e6" opacity="0.45"/><ellipse cx="703.8" cy="688.5" rx="7.0" ry="1.8" fill="#8aa2e6" opacity="0.45"/><ellipse cx="702" cy="697.5" rx="8.5" ry="2.7" fill="#e4b09c" opacity="0.8"/><ellipse cx="760.3" cy="699.3" rx="8.5" ry="2.7" fill="#d4c4c0" opacity="0.8"/><ellipse cx="790.4" cy="699.3" rx="7.0" ry="1.8" fill="#8aa2e6" opacity="0.45"/><ellipse cx="778.4" cy="705.3" rx="7.0" ry="1.8" fill="#8aa2e6" opacity="0.45"/><ellipse cx="816.9" cy="693.3" rx="8.5" ry="2.7" fill="#b4c2ea" opacity="0.8"/><ellipse cx="826.5" cy="690.9" rx="7.5" ry="2.7" fill="#e4b09c" opacity="0.8"/><ellipse cx="820.5" cy="699.3" rx="7.5" ry="2.7" fill="#e4b09c" opacity="0.8"/><ellipse cx="844.6" cy="697" rx="8.5" ry="2.7" fill="#b4c2ea" opacity="0.8"/><ellipse cx="842.2" cy="677.7" rx="8.5" ry="2.7" fill="#b4c2ea" opacity="0.8"/><ellipse cx="837.8" cy="624.6" rx="6.5" ry="1.8" fill="#8aa2e6" opacity="0.45"/><ellipse cx="858.5" cy="638.2" rx="9.0" ry="2.7" fill="#b4c2ea" opacity="0.8"/><ellipse cx="845.6" cy="653.2" rx="11.0" ry="1.8" fill="#8aa2e6" opacity="0.45"/><ellipse cx="892.2" cy="662.9" rx="9.0" ry="2.7" fill="#b4c2ea" opacity="0.8"/><ellipse cx="924.6" cy="655.7" rx="9.5" ry="3.2" fill="#e4b09c" opacity="0.8"/><ellipse cx="935" cy="664.8" rx="9.0" ry="2.7" fill="#b4c2ea" opacity="0.8"/><ellipse cx="1024.5" cy="644.1" rx="9.5" ry="2.7" fill="#d4c4c0" opacity="0.8"/><ellipse cx="840.4" cy="670" rx="6.0" ry="1.8" fill="#8aa2e6" opacity="0.45"/><ellipse cx="874.1" cy="675.8" rx="7.0" ry="1.8" fill="#8aa2e6" opacity="0.45"/><ellipse cx="841.7" cy="677.8" rx="8.5" ry="2.7" fill="#b4c2ea" opacity="0.8"/><ellipse cx="843" cy="683.6" rx="7.0" ry="1.8" fill="#8aa2e6" opacity="0.45"/><ellipse cx="940.2" cy="684.3" rx="9.0" ry="2.7" fill="#b4c2ea" opacity="0.8"/><ellipse cx="901.3" cy="686.9" rx="9.5" ry="1.8" fill="#8aa2e6" opacity="0.45"/><ellipse cx="981.7" cy="689.4" rx="7.5" ry="1.8" fill="#8aa2e6" opacity="0.45"/><ellipse cx="918.2" cy="694.6" rx="9.0" ry="2.7" fill="#b4c2ea" opacity="0.8"/><ellipse cx="849.4" cy="696.6" rx="7.5" ry="1.8" fill="#8aa2e6" opacity="0.45"/><ellipse cx="867.6" cy="696.6" rx="9.0" ry="2.7" fill="#b4c2ea" opacity="0.8"/><ellipse cx="889.6" cy="703.1" rx="7.0" ry="1.8" fill="#8aa2e6" opacity="0.45"/><ellipse cx="914.3" cy="705" rx="12.5" ry="2.7" fill="#b4c2ea" opacity="0.8"/><ellipse cx="931.1" cy="704.4" rx="8.5" ry="2.7" fill="#b4c2ea" opacity="0.8"/><ellipse cx="951.9" cy="702.4" rx="7.5" ry="1.8" fill="#8aa2e6" opacity="0.45"/><ellipse cx="879.3" cy="708.9" rx="8.5" ry="2.7" fill="#e4b09c" opacity="0.8"/><ellipse cx="901.3" cy="712.8" rx="11.0" ry="1.8" fill="#8aa2e6" opacity="0.45"/><ellipse cx="861.1" cy="725.7" rx="9.0" ry="2.7" fill="#d4c4c0" opacity="0.8"/><ellipse cx="883.1" cy="729.6" rx="9.0" ry="3.2" fill="#e0a090" opacity="0.8"/></g><g filter="url(#blur1)"><ellipse cx="824.1" cy="653.6" rx="5.5" ry="2.6" fill="#c42838"/><ellipse cx="883.1" cy="729.6" rx="6" ry="2.8" fill="#d83030"/></g><line x1="693.4" y1="646.2" x2="881.9" y2="663.1" stroke="#e4e4ee" stroke-width="1.4" /><circle cx="881.9" cy="663.1" r="2.4" fill="#e0e8d0"/><line x1="631.7" y1="964.3" x2="628.5" y2="913" stroke="#3cc83c" stroke-width="1.3" /><path d="M624 919 L628 906 L632.5 919 Z" fill="#22dd22"/><line x1="631.7" y1="964.3" x2="583" y2="959.6" stroke="#c8c040" stroke-width="1.3" /><path d="M578 959.5 L585 955.5 L591 960 L585 963.5 Z" fill="#b8b020"/><line x1="631.7" y1="964.3" x2="660" y2="956.5" stroke="#a83040" stroke-width="1.3" /><circle cx="662.2" cy="956" r="4" fill="#e01010"/><text x="632" y="918" font-size="16" fill="#ffffff" >Z</text><text x="589" y="961" font-size="16" fill="#ffffff" >Y</text><text x="665" y="957" font-size="16" fill="#ffffff" >X</text><rect x="1042" y="783.7" width="22" height="274.3" fill="url(#cmap)" /><line x1="1058.5" y1="782.5" x2="1074.8" y2="782.5" stroke="#d8d8e0" stroke-width="1.3" /><text x="1082" y="788" font-size="16.5" fill="#ffffff" textLength="84.11" lengthAdjust="spacingAndGlyphs" >7.6e+07</text><line x1="1058.5" y1="804.5" x2="1074.8" y2="804.5" stroke="#d8d8e0" stroke-width="1.3" /><text x="1082" y="809.9" font-size="16.5" fill="#ffffff" textLength="52.02" lengthAdjust="spacingAndGlyphs" >7e+7</text><line x1="1058.5" y1="822.5" x2="1074.8" y2="822.5" stroke="#d8d8e0" stroke-width="1.3" /><text x="1082" y="828" font-size="16.5" fill="#ffffff" textLength="71.27" lengthAdjust="spacingAndGlyphs" >6.5e+7</text><line x1="1058.5" y1="840.5" x2="1074.8" y2="840.5" stroke="#d8d8e0" stroke-width="1.3" /><text x="1082" y="846" font-size="16.5" fill="#ffffff" textLength="52.02" lengthAdjust="spacingAndGlyphs" >6e+7</text><line x1="1058.5" y1="858.5" x2="1074.8" y2="858.5" stroke="#d8d8e0" stroke-width="1.3" /><text x="1082" y="864" font-size="16.5" fill="#ffffff" textLength="71.27" lengthAdjust="spacingAndGlyphs" >5.5e+7</text><line x1="1058.5" y1="876.5" x2="1074.8" y2="876.5" stroke="#d8d8e0" stroke-width="1.3" /><text x="1082" y="882.5" font-size="16.5" fill="#ffffff" textLength="52.02" lengthAdjust="spacingAndGlyphs" >5e+7</text><line x1="1058.5" y1="895.5" x2="1074.8" y2="895.5" stroke="#d8d8e0" stroke-width="1.3" /><text x="1082" y="900.6" font-size="16.5" fill="#ffffff" textLength="71.27" lengthAdjust="spacingAndGlyphs" >4.5e+7</text><line x1="1058.5" y1="912.5" x2="1074.8" y2="912.5" stroke="#d8d8e0" stroke-width="1.3" /><text x="1082" y="918.5" font-size="16.5" fill="#ffffff" textLength="52.02" lengthAdjust="spacingAndGlyphs" >4e+7</text><line x1="1058.5" y1="930.5" x2="1074.8" y2="930.5" stroke="#d8d8e0" stroke-width="1.3" /><text x="1082" y="936.5" font-size="16.5" fill="#ffffff" textLength="71.27" lengthAdjust="spacingAndGlyphs" >3.5e+7</text><line x1="1058.5" y1="949.5" x2="1074.8" y2="949.5" stroke="#d8d8e0" stroke-width="1.3" /><text x="1082" y="954.7" font-size="16.5" fill="#ffffff" textLength="52.02" lengthAdjust="spacingAndGlyphs" >3e+7</text><line x1="1058.5" y1="967.5" x2="1074.8" y2="967.5" stroke="#d8d8e0" stroke-width="1.3" /><text x="1082" y="972.8" font-size="16.5" fill="#ffffff" textLength="71.27" lengthAdjust="spacingAndGlyphs" >2.5e+7</text><line x1="1058.5" y1="985.5" x2="1074.8" y2="985.5" stroke="#d8d8e0" stroke-width="1.3" /><text x="1082" y="991" font-size="16.5" fill="#ffffff" textLength="52.02" lengthAdjust="spacingAndGlyphs" >2e+7</text><line x1="1058.5" y1="1003.5" x2="1074.8" y2="1003.5" stroke="#d8d8e0" stroke-width="1.3" /><text x="1082" y="1009" font-size="16.5" fill="#ffffff" textLength="71.27" lengthAdjust="spacingAndGlyphs" >1.5e+7</text><line x1="1058.5" y1="1021.5" x2="1074.8" y2="1021.5" stroke="#d8d8e0" stroke-width="1.3" /><text x="1082" y="1027" font-size="16.5" fill="#ffffff" textLength="52.02" lengthAdjust="spacingAndGlyphs" >1e+7</text><line x1="1058.5" y1="1058.5" x2="1074.8" y2="1058.5" stroke="#d8d8e0" stroke-width="1.3" /><text x="1082" y="1063.5" font-size="16.5" fill="#ffffff" textLength="84.11" lengthAdjust="spacingAndGlyphs" >0.0e+00</text><text x="0" y="0" font-size="18.5" fill="#ffffff" textLength="147" lengthAdjust="spacingAndGlyphs" transform="translate(1188,994) rotate(-90)">vel.e- Magnitude</text><line x1="39" y1="194.5" x2="39" y2="200" stroke="#a0a0a0" stroke-width="1.2" stroke-dasharray="2 1.5"/><line x1="39" y1="217" x2="39" y2="224" stroke="#a0a0a0" stroke-width="1.2" stroke-dasharray="2 1.5"/><line x1="39" y1="240.5" x2="39" y2="247" stroke="#a0a0a0" stroke-width="1.2" stroke-dasharray="2 1.5"/><rect x="33.5" y="201" width="11" height="15" fill="#e8e8e8" stroke="#222" stroke-width="1.3" rx="1" /><rect x="36" y="203.5" width="6" height="3" fill="#333" /><rect x="36" y="208" width="6" height="6" fill="#aaa" /><text x="54" y="213" font-size="13" fill="#111" textLength="43.70" lengthAdjust="spacingAndGlyphs" >builtin:</text><path d="M4 232.5 Q14 223.5 24 232.5 Q14 241.5 4 232.5 Z" fill="#eef4fa" stroke="#6a8cb0" stroke-width="1"/><circle cx="14.5" cy="232.5" r="4.6" fill="#2a64a8"/><circle cx="14.5" cy="232.5" r="2.6" fill="#0a1a40"/><circle cx="12.8" cy="230.7" r="1.1" fill="#fff"/><path d="M28 228 L39 224.5 L50 228 L50 238 L39 241 L28 238 Z" fill="#6fa858" stroke="#4a7a3a" stroke-width="0.8"/><path d="M28 228 L39 231 L50 228 L39 224.5 Z" fill="#9ccc80"/><path d="M39 231 L39 241 L28 238 L28 228 Z" fill="#5a9445"/><text x="54" y="237.2" font-size="13" fill="#111" textLength="60.60" lengthAdjust="spacingAndGlyphs" >00180.vti</text><rect x="27.5" y="247.5" width="134" height="18" fill="#eef6fc" stroke="#b8d6f0" stroke-width="1" /><path d="M4 256.5 Q14 247.5 24 256.5 Q14 265.5 4 256.5 Z" fill="#eef4fa" stroke="#6a8cb0" stroke-width="1"/><circle cx="14.5" cy="256.5" r="4.6" fill="#2a64a8"/><circle cx="14.5" cy="256.5" r="2.6" fill="#0a1a40"/><circle cx="12.8" cy="254.7" r="1.1" fill="#fff"/><path d="M29 260 L32 255 L34 258 L37 252 L39 259 L42 254 L44 257 L47 251 L49 254" fill="none" stroke="#3a78c8" stroke-width="1.1"/><line x1="28" y1="264.5" x2="50" y2="264.5" stroke="#666" stroke-width="1" /><line x1="28.5" y1="250" x2="28.5" y2="265" stroke="#666" stroke-width="1" /><text x="54" y="261" font-size="13" fill="#111" font-weight="bold" textLength="101.00" lengthAdjust="spacingAndGlyphs" >PlotOverLine1</text><rect x="10" y="626" width="115" height="34" fill="none" stroke="#f00a0a" stroke-width="5" rx="6" filter="url(#shadow)"/><rect x="14.0" y="630.5" width="107.0" height="25" fill="url(#apply)" stroke="#6e9e86" stroke-width="1" rx="3" /><g opacity="0.75"><path d="M36 645 L42 643 L48 645 L48 651 L42 653 L36 651 Z" fill="#c8c8c8" stroke="#888" stroke-width="0.8"/><path d="M44 643 L51 637" stroke="#6a9a5a" stroke-width="1.5"/><path d="M48 636 L52 636 L52 640" fill="none" stroke="#6a9a5a" stroke-width="1.3"/></g><text x="58.6" y="648" font-size="13.5" fill="#111" textLength="36.40" lengthAdjust="spacingAndGlyphs" stroke="#111" stroke-width="0.45">Apply</text><rect x="128.0" y="631.0" width="111.5" height="24.0" fill="url(#btn)" stroke="#b4b4b4" stroke-width="1" rx="3" /><circle cx="160" cy="643" r="7" fill="none" stroke="#c8202c" stroke-width="2.6"/><line x1="155.5" y1="647.5" x2="164.5" y2="638.5" stroke="#c8202c" stroke-width="2.6"/><text x="174.5" y="648" font-size="13.5" fill="#111" textLength="39.50" lengthAdjust="spacingAndGlyphs" stroke="#111" stroke-width="0.45">Reset</text><rect x="245.0" y="631.0" width="111.0" height="24.0" fill="url(#btn)" stroke="#b4b4b4" stroke-width="1" rx="3" /><path d="M270 638.5 L279.5 648 M279.5 638.5 L270 648" stroke="#e01c24" stroke-width="4.6" stroke-linecap="square"/><text x="289.6" y="648" font-size="13.5" fill="#111" textLength="43.20" lengthAdjust="spacingAndGlyphs" stroke="#111" stroke-width="0.45">Delete</text><rect x="361.0" y="631.0" width="111.0" height="24.0" fill="url(#btn)" stroke="#b4b4b4" stroke-width="1" rx="3" /><path d="M411.5 639 Q411.5 635 416.5 635 Q421.5 635 421.5 639.5 Q421.5 642.5 418 644 Q416.5 645 416.5 647.5" fill="none" stroke="#6a8a5a" stroke-width="3.4" stroke-linecap="round"/><path d="M411.5 639 Q411.5 635 416.5 635 Q421.5 635 421.5 639.5 Q421.5 642.5 418 644 Q416.5 645 416.5 647.5" fill="none" stroke="#a8d090" stroke-width="1.8" stroke-linecap="round"/><circle cx="416.5" cy="651" r="1.8" fill="#a8d090" stroke="#6a8a5a" stroke-width="0.8"/><g filter="url(#shadow2)"><circle cx="104.7" cy="605.3" r="14.5" fill="none" stroke="#ffffff" stroke-width="3.5"/><circle cx="104.7" cy="605.3" r="14.5" fill="none" stroke="#e8141e" stroke-width="1.6"/><text x="104.7" y="614.8" font-size="26" font-weight="bold" fill="#e8141e" text-anchor="middle" stroke="#ffffff" stroke-width="1.2" paint-order="stroke" textLength="16" lengthAdjust="spacingAndGlyphs">5</text></g><rect x="11" y="664" width="426.5" height="22" fill="#ffffff" stroke="#b8b8b8" stroke-width="1" rx="2" /><text x="15" y="680" font-size="13" fill="#8a8a8a" textLength="221.00" lengthAdjust="spacingAndGlyphs" >Search ... (use Esc to clear text)</text><rect x="442.5" y="664.5" width="29.69999999999999" height="21.5" fill="url(#btn)" stroke="#b4b4b4" stroke-width="1" rx="3" /><g transform="translate(457.3,675.2)"><circle r="6" fill="#cacaca" stroke="#8e8e8e" stroke-width="1"/><circle r="2.5" fill="#f4f4f4" stroke="#8e8e8e" stroke-width="0.6"/><rect x="-1.7" y="-8.3" width="3.4" height="3.3" fill="#b4b4b4" transform="rotate(0)"/><rect x="-1.7" y="-8.3" width="3.4" height="3.3" fill="#b4b4b4" transform="rotate(45)"/><rect x="-1.7" y="-8.3" width="3.4" height="3.3" fill="#b4b4b4" transform="rotate(90)"/><rect x="-1.7" y="-8.3" width="3.4" height="3.3" fill="#b4b4b4" transform="rotate(135)"/><rect x="-1.7" y="-8.3" width="3.4" height="3.3" fill="#b4b4b4" transform="rotate(180)"/><rect x="-1.7" y="-8.3" width="3.4" height="3.3" fill="#b4b4b4" transform="rotate(225)"/><rect x="-1.7" y="-8.3" width="3.4" height="3.3" fill="#b4b4b4" transform="rotate(270)"/><rect x="-1.7" y="-8.3" width="3.4" height="3.3" fill="#b4b4b4" transform="rotate(315)"/></g><rect x="10.5" y="694.5" width="267.5" height="27" fill="#ececec" stroke="#c8c8c8" stroke-width="1" /><rect x="26" y="707.5" width="18" height="3" fill="#3d8fc8" /><text x="54.5" y="713.7" font-size="13.5" fill="#111" font-weight="bold" textLength="191.50" lengthAdjust="spacingAndGlyphs" >Properties (PlotOverLine1)</text><rect x="286.0" y="696.5" width="36.0" height="24" fill="url(#btn)" stroke="#b4b4b4" stroke-width="1" rx="3" /><rect x="330.0" y="696.5" width="36.0" height="24" fill="url(#btn)" stroke="#b4b4b4" stroke-width="1" rx="3" /><rect x="373.5" y="696.5" width="36" height="24" fill="url(#btn)" stroke="#b4b4b4" stroke-width="1" rx="3" /><rect x="417.0" y="696.5" width="36.0" height="24" fill="url(#btn)" stroke="#b4b4b4" stroke-width="1" rx="3" /><g fill="#d8d8d8" stroke="#8a8a8a" stroke-width="1"><rect x="296" y="702" width="11" height="13"/><rect x="301" y="699" width="11" height="13"/></g><g fill="#e2e2e2" stroke="#b0b0b0" stroke-width="1"><rect x="340" y="702" width="11" height="13"/><rect x="345" y="699" width="11" height="13"/></g><path d="M383 706 A8 8 0 0 1 398 704 M399 710 A8 8 0 0 1 384 712" fill="none" stroke="#8c8c8c" stroke-width="2.6"/><path d="M396 700 L400 705 L394 706 Z M386 716 L382 711 L388 710Z" fill="#8c8c8c"/><g><rect x="427" y="700" width="15" height="16" rx="1" fill="#8c8c8c"/><rect x="430" y="701" width="9" height="5" fill="#e8e8e8"/><rect x="430" y="709" width="9" height="7" fill="#dcdcdc"/></g><rect x="455" y="697" width="17.5" height="367" fill="#ffffff" /><path d="M459 705 L464 700 L469 705 Z" fill="#3a3a3a"/><line x1="455" y1="709" x2="472" y2="709" stroke="#e0e0e0" stroke-width="1" /><rect x="455.5" y="817" width="17" height="232" fill="#e4e4e4" stroke="#d8d8d8" stroke-width="1" /><path d="M459 1054 L464 1059 L469 1054 Z" fill="#3a3a3a"/><text x="11" y="747" font-size="13.5" fill="#111" textLength="116.00" lengthAdjust="spacingAndGlyphs" >Sampling Pattern</text><rect x="134.0" y="730.5" width="319.5" height="22" fill="url(#btn)" stroke="#b4b4b4" stroke-width="1" rx="3" /><text x="140.5" y="747" font-size="13.5" fill="#111" textLength="118.00" lengthAdjust="spacingAndGlyphs" >Sample Uniformly</text><path d="M433 740 L443 740 L438 745 Z" fill="#333"/><text x="11" y="775" font-size="13.5" fill="#111" textLength="70.80" lengthAdjust="spacingAndGlyphs" >Resolution</text><rect x="133.5" y="758.5" width="320.5" height="22.5" fill="#ffffff" stroke="#b4b4b4" stroke-width="1" rx="2" /><text x="138.5" y="775" font-size="13.5" fill="#111" textLength="31.50" lengthAdjust="spacingAndGlyphs" >1000</text><text x="11" y="802" font-size="13.5" fill="#111" font-weight="bold" textLength="116.00" lengthAdjust="spacingAndGlyphs" >Line Parameters</text><line x1="11" y1="804.5" x2="454" y2="804.5" stroke="#d4d4d4" stroke-width="1" /><rect x="11.2" y="813" width="441.5" height="230" fill="none" stroke="#0000d8" stroke-width="2.6" /><text x="13.4" y="825" font-size="12.5" fill="#111" font-weight="bold" textLength="96.2" lengthAdjust="spacingAndGlyphs">Length: <tspan font-style="italic">0.039</tspan></text><rect x="16.5" y="832" width="15" height="14" fill="#ffffff" stroke="#c0c0c0" stroke-width="1" /><path d="M19 838.5 L23 843 L29.5 834" fill="none" stroke="#111" stroke-width="2"/><text x="39.7" y="843.7" font-size="13" fill="#111" textLength="69.10" lengthAdjust="spacingAndGlyphs" >Show Line</text><text x="13.4" y="867.9" font-size="13" fill="#111" textLength="41.60" lengthAdjust="spacingAndGlyphs" >Point1</text><text x="13.4" y="893.5" font-size="13" fill="#111" textLength="41.60" lengthAdjust="spacingAndGlyphs" >Point2</text><rect x="64.1" y="854.5" width="124.4" height="20" fill="#ffffff" stroke="#c4c4c4" stroke-width="1" /><text x="65.1" y="868.5" font-size="13" fill="#111" textLength="46.96" lengthAdjust="spacingAndGlyphs" >−0.025</text><rect x="193.3" y="854.5" width="126.19999999999999" height="20" fill="#ffffff" stroke="#c4c4c4" stroke-width="1" /><text x="194.3" y="868.5" font-size="13" fill="#111" textLength="46.96" lengthAdjust="spacingAndGlyphs" >−0.025</text><rect x="324.1" y="854.5" width="120.79999999999995" height="20" fill="#ffffff" stroke="#c4c4c4" stroke-width="1" /><text x="325.1" y="868.5" font-size="13" fill="#111" textLength="29.62" lengthAdjust="spacingAndGlyphs" >0.02</text><rect x="64.1" y="877.8" width="124.4" height="20.100000000000023" fill="#ffffff" stroke="#c4c4c4" stroke-width="1" /><text x="65.1" y="891.9" font-size="13" fill="#111" textLength="46.96" lengthAdjust="spacingAndGlyphs" >−0.025</text><rect x="193.3" y="877.8" width="126.19999999999999" height="20.100000000000023" fill="#ffffff" stroke="#c4c4c4" stroke-width="1" /><text x="194.3" y="891.9" font-size="13" fill="#111" textLength="38.08" lengthAdjust="spacingAndGlyphs" >0.014</text><rect x="324.1" y="877.8" width="120.79999999999995" height="20.100000000000023" fill="#ffffff" stroke="#c4c4c4" stroke-width="1" /><text x="325.1" y="891.9" font-size="13" fill="#111" textLength="29.62" lengthAdjust="spacingAndGlyphs" >0.02</text><rect x="60.5" y="851.5" width="387" height="48" fill="none" stroke="#f00a0a" stroke-width="5" rx="8" filter="url(#shadow)"/><g filter="url(#shadow2)"><circle cx="200.9" cy="830.3" r="14.5" fill="none" stroke="#ffffff" stroke-width="3.5"/><circle cx="200.9" cy="830.3" r="14.5" fill="none" stroke="#e8141e" stroke-width="1.6"/><text x="200.9" y="839.8" font-size="26" font-weight="bold" fill="#e8141e" text-anchor="middle" stroke="#ffffff" stroke-width="1.2" paint-order="stroke" textLength="16" lengthAdjust="spacingAndGlyphs">4</text></g><rect x="62.3" y="905.5" width="387.8" height="18.299999999999955" fill="url(#btn)" stroke="#b4b4b4" stroke-width="1" rx="3" /><text x="218.5" y="919" font-size="13" fill="#111" textLength="75.50" lengthAdjust="spacingAndGlyphs" >Flip Vector</text><text x="13.4" y="939" font-size="12.5" fill="#111" font-weight="bold" textLength="425.60" lengthAdjust="spacingAndGlyphs" >Note: Use 'P' to place alternating points on mesh or 'Ctrl+P'</text><text x="13.4" y="951.5" font-size="12.5" fill="#111" font-weight="bold" textLength="242.30" lengthAdjust="spacingAndGlyphs" >to snap to the closest mesh point.</text><text x="13.4" y="964.5" font-size="12.5" fill="#111" font-weight="bold" textLength="379.60" lengthAdjust="spacingAndGlyphs" >Use '1'/'Ctrl+1' for point 1 and '2'/'Ctrl+2' for point 2.</text><text x="13.4" y="977.4" font-size="12.5" fill="#111" font-weight="bold" textLength="402.10" lengthAdjust="spacingAndGlyphs" >Use 'N' to place P1 on the mesh and make P1−P2 be the</text><text x="13.4" y="990.5" font-size="12.5" fill="#111" font-weight="bold" textLength="156.10" lengthAdjust="spacingAndGlyphs" >normal at the surface.</text><text x="13.4" y="1003.5" font-size="12.5" fill="#111" font-weight="bold" textLength="427.60" lengthAdjust="spacingAndGlyphs" >Use 'X'/'Y'/'Z'/'L' to constrain the movement to the X / Y /</text><text x="13.4" y="1016.5" font-size="12.5" fill="#111" font-weight="bold" textLength="185.10" lengthAdjust="spacingAndGlyphs" >Z / Line axis respectively.</text><rect x="13.9" y="1022.0" width="142.6" height="19.90000000000009" fill="url(#btn)" stroke="#b4b4b4" stroke-width="1" rx="3" /><text x="63" y="1037" font-size="13" fill="#111" textLength="39.00" lengthAdjust="spacingAndGlyphs" >X Axis</text><rect x="161.5" y="1022.0" width="141.39999999999998" height="19.90000000000009" fill="url(#btn)" stroke="#b4b4b4" stroke-width="1" rx="3" /><text x="210.5" y="1037" font-size="13" fill="#111" textLength="43.50" lengthAdjust="spacingAndGlyphs" >Y Axis</text><rect x="308.0" y="1022.0" width="142.5" height="19.90000000000009" fill="url(#btn)" stroke="#b4b4b4" stroke-width="1" rx="3" /><text x="357.5" y="1037" font-size="13" fill="#111" textLength="43.00" lengthAdjust="spacingAndGlyphs" >Z Axis</text><clipPath id="clipb"><rect x="0" y="1046" width="480" height="18"/></clipPath><g clip-path="url(#clipb)"><rect x="10.5" y="1051.5" width="267.5" height="27" fill="#ececec" stroke="#c8c8c8" stroke-width="1" /><rect x="26" y="1063" width="18" height="2.6" fill="#7a8a96" /><text x="54.7" y="1071" font-size="13.5" fill="#111" font-weight="bold" textLength="203.30" lengthAdjust="spacingAndGlyphs" >Display (GeometryRepresentation)</text><rect x="286.0" y="1053.5" width="36.0" height="24" fill="url(#btn)" stroke="#b4b4b4" stroke-width="1" rx="3" /><rect x="330.0" y="1053.5" width="36.0" height="24" fill="url(#btn)" stroke="#b4b4b4" stroke-width="1" rx="3" /><rect x="373.5" y="1053.5" width="36" height="24" fill="url(#btn)" stroke="#b4b4b4" stroke-width="1" rx="3" /><rect x="417.0" y="1053.5" width="36.0" height="24" fill="url(#btn)" stroke="#b4b4b4" stroke-width="1" rx="3" /></g><rect x="6.0" y="53" width="1.1" height="1.1" fill="#c2c2c2" /><rect x="9.0" y="53" width="1.1" height="1.1" fill="#c2c2c2" /><rect x="6.0" y="56" width="1.1" height="1.1" fill="#c2c2c2" /><rect x="9.0" y="56" width="1.1" height="1.1" fill="#c2c2c2" /><rect x="6.0" y="59" width="1.1" height="1.1" fill="#c2c2c2" /><rect x="9.0" y="59" width="1.1" height="1.1" fill="#c2c2c2" /><rect x="6.0" y="62" width="1.1" height="1.1" fill="#c2c2c2" /><rect x="9.0" y="62" width="1.1" height="1.1" fill="#c2c2c2" /><rect x="6.0" y="65" width="1.1" height="1.1" fill="#c2c2c2" /><rect x="9.0" y="65" width="1.1" height="1.1" fill="#c2c2c2" /><rect x="6.0" y="68" width="1.1" height="1.1" fill="#c2c2c2" /><rect x="9.0" y="68" width="1.1" height="1.1" fill="#c2c2c2" /><rect x="6.0" y="71" width="1.1" height="1.1" fill="#c2c2c2" /><rect x="9.0" y="71" width="1.1" height="1.1" fill="#c2c2c2" /><rect x="6.0" y="74" width="1.1" height="1.1" fill="#c2c2c2" /><rect x="9.0" y="74" width="1.1" height="1.1" fill="#c2c2c2" /><g transform="translate(22.5,52.75)"><path d="M0.5 3.5 h6 l2 2 h8 v16 h-16 z" fill="#e8b85a" stroke="#9a7a3a" stroke-width="1"/><path d="M4.5 9.5 h25 v12 h-25 z" fill="#f2d86a" stroke="#9a7a3a" stroke-width="1"/><path d="M23.3 0.3 L28.5 7.3 L25 7.3 L25 10 L21.8 10 L21.8 7.3 L18.5 7.3 Z" fill="#3a8ad0"/></g><g transform="translate(66,52.75)"><path d="M0.5 3.5 h6 l2 2 h8 v16 h-16 z" fill="#e8b85a" stroke="#9a7a3a" stroke-width="1"/><path d="M4.5 9.5 h25 v12 h-25 z" fill="#f2d86a" stroke="#9a7a3a" stroke-width="1"/><path d="M18.4 1 h8.3 v7.5 h2.6 l-6.8 6.5 l-6.8 -6.5 h2.7 z" fill="#a5d28c" stroke="#5e8f4a" stroke-width="0.9"/></g><g transform="translate(110,52.75)"><rect x="1" y="14.7" width="28.6" height="8.9" rx="2" fill="#c8c8c8" stroke="#8e8e8e" stroke-width="1"/><circle cx="5.1" cy="19.4" r="1.3" fill="none" stroke="#777" stroke-width="0.8"/><path d="M11.9 0.6 h8.3 v7.9 h4.2 l-9 10.4 l-9.4 -10.4 h5.9 z" fill="#a5d28c" stroke="#6e9a5a" stroke-width="0.9"/></g><g transform="translate(153,53)" fill="none" stroke="#3d85a5" stroke-width="2.6"><path d="M1.3 6 v-2.5 a2 2 0 0 1 2 -2 h3"/><path d="M24.5 1.5 h3 a2 2 0 0 1 2 2 v2.5"/><path d="M1.3 19 v2.5 a2 2 0 0 0 2 2 h3"/><path d="M29.5 19 v2.5 a2 2 0 0 1 -2 2 h-3"/></g><path transform="translate(153,53)" d="M5 16.5 L15.5 9.5 L13 7.5 L25 5.5 L21.5 16 L19.5 13.8 L9 20.5 Z" fill="#f2b820" stroke="#9a7a20" stroke-width="0.8"/><path d="M197 64.5 Q195.5 66.5 197.5 68 L211 77.5 Q213 78.5 214 76.5 L220 59.8 L226.5 55.8 L228.8 58 L229.5 56.5 L222.5 51.5 L221.5 53 L222.5 53.5 L216.8 57.3 Z" fill="#ffffff" stroke="#9a9a9a" stroke-width="1"/><path d="M199.5 65 L204.5 62.5 L205.5 68.5 L201 67.5 Z" fill="#c0202a"/><path d="M206 61.2 L212.5 59.5 L208.5 72.5 L205 70.5 Z" fill="#2a9a3a"/><path d="M213.5 59.5 L219.5 58.5 L213 76 L209.8 73.5 Z" fill="#1e50a0"/><line x1="239.5" y1="54" x2="239.5" y2="76" stroke="#d2d2d2" stroke-width="1" /><g transform="translate(250.75,53)"><path d="M0.5 3 L5.5 0.8 L14 2.2 L14 15.5 L9 17.8 L0.5 16 Z" fill="#a8a8a0" stroke="#8a8a8a" stroke-width="0.9"/><path d="M0.5 3 L5.5 0.8 L14 2.2 L9 4.5 Z" fill="#d0d0cc"/><path d="M9 4.5 L14 2.2 L14 15.5 L9 17.8 Z" fill="#f6f6f6" stroke="#8a8a8a" stroke-width="0.8"/><path d="M10.5 7.5 l2 -1 M10.5 9.5 l2 -1" stroke="#999" stroke-width="0.7"/><path d="M14.0 3 L19.0 0.8 L27.5 2.2 L27.5 15.5 L22.5 17.8 L14.0 16 Z" fill="#a8a8a0" stroke="#8a8a8a" stroke-width="0.9"/><path d="M14.0 3 L19.0 0.8 L27.5 2.2 L22.5 4.5 Z" fill="#d0d0cc"/><path d="M22.5 4.5 L27.5 2.2 L27.5 15.5 L22.5 17.8 Z" fill="#f6f6f6" stroke="#8a8a8a" stroke-width="0.8"/><path d="M24.0 7.5 l2 -1 M24.0 9.5 l2 -1" stroke="#999" stroke-width="0.7"/><path d="M3.5 17 v5 h21 v-5" fill="none" stroke="#999" stroke-width="1.2"/><ellipse cx="14" cy="22.3" rx="3.6" ry="2.8" fill="#a8d090" stroke="#7aa866" stroke-width="0.7"/></g><g transform="translate(294.5,53)"><path d="M0.5 3 L5.5 0.8 L14 2.2 L14 15.5 L9 17.8 L0.5 16 Z" fill="#a8a8a0" stroke="#8a8a8a" stroke-width="0.9"/><path d="M0.5 3 L5.5 0.8 L14 2.2 L9 4.5 Z" fill="#d0d0cc"/><path d="M9 4.5 L14 2.2 L14 15.5 L9 17.8 Z" fill="#f6f6f6" stroke="#8a8a8a" stroke-width="0.8"/><path d="M10.5 7.5 l2 -1 M10.5 9.5 l2 -1" stroke="#999" stroke-width="0.7"/><path d="M14.0 3 L19.0 0.8 L27.5 2.2 L27.5 15.5 L22.5 17.8 L14.0 16 Z" fill="#a8a8a0" stroke="#8a8a8a" stroke-width="0.9"/><path d="M14.0 3 L19.0 0.8 L27.5 2.2 L22.5 4.5 Z" fill="#d0d0cc"/><path d="M22.5 4.5 L27.5 2.2 L27.5 15.5 L22.5 17.8 Z" fill="#f6f6f6" stroke="#8a8a8a" stroke-width="0.8"/><path d="M24.0 7.5 l2 -1 M24.0 9.5 l2 -1" stroke="#999" stroke-width="0.7"/><path d="M3.5 17 v5 h21 v-5" fill="none" stroke="#999" stroke-width="1.2"/><path d="M11.3 19.8 L16.7 25 M16.7 19.8 L11.3 25" stroke="#d02828" stroke-width="2.6"/></g><path d="M340.59999999999997 66.6 A12 9.3 0 1 0 345.4 57.599999999999994" fill="none" stroke="#6e9a5a" stroke-width="4.8"/><path d="M340.59999999999997 66.6 A12 9.3 0 1 0 345.4 57.599999999999994" fill="none" stroke="#a8d090" stroke-width="3"/><path d="M338.4 62.099999999999994 L338.9 55.099999999999994 L347.9 58.599999999999994 Z" fill="#a8d090" stroke="#6e9a5a" stroke-width="0.8"/><rect x="350.59999999999997" y="58.099999999999994" width="2.6" height="7" rx="1.3" fill="#d8b840" stroke="#9a8030" stroke-width="0.5"/><line x1="378.5" y1="54" x2="378.5" y2="76" stroke="#d2d2d2" stroke-width="1" /><path transform="translate(390,54)" d="M0.5 17.8 L3.5 2.5 L7 7.5 Q14 2 21 6 Q28 11 20.5 22 Q24 12 16.5 10 Q12.5 9 9.5 12 L13.5 15 Z" fill="#ee1c1c" stroke="#b01010" stroke-width="0.6"/><path transform="translate(434,54)" d="M27.5 17.5 L24.5 2.5 L21 7.5 Q14 2 7 6 Q0 11 7.5 22 Q4 12 11.5 10 Q15.5 9 18.5 12 L14.5 15 Z" fill="#a5d28c" stroke="#5e8f4a" stroke-width="0.9"/><line x1="474.5" y1="54" x2="474.5" y2="76" stroke="#d2d2d2" stroke-width="1" /><g transform="translate(486,53)"><path d="M1 10 L7.5 7.8 L14.5 10 L14.5 21 L8 23.2 L1 21 Z" fill="#b0b0a8" stroke="#7a7a7a" stroke-width="0.9"/><path d="M8 12 L14.5 10 L14.5 21 L8 23.2 Z" fill="#f0f0f0" stroke="#7a7a7a" stroke-width="0.8"/><path d="M11 11 L18 5.5 L16 3.5 L26.5 1 L24 11 L22 9 L15 15 Z" fill="#a5d28c" stroke="#5e8f4a" stroke-width="0.9"/></g><g transform="translate(529,53)"><linearGradient id="cms" x1="0" y1="0" x2="0" y2="1"><stop offset="0" stop-color="#d4d4d4"/><stop offset="0.45" stop-color="#d4d4d4"/><stop offset="0.5" stop-color="#30a8e0"/><stop offset="1" stop-color="#5030a0"/></linearGradient><rect x="2.5" y="0.5" width="15.5" height="20.5" fill="url(#cms)" stroke="#8a8a8a" stroke-width="1"/><rect x="0.5" y="9" width="28" height="14.5" fill="none" stroke="#5a5a5a" stroke-width="1.1" stroke-dasharray="3 2"/><path d="M20 17 L27 23 L25.5 24.5 L18.5 18.5 Z M17.5 15.5 L23.5 17 L19 21.5 Z" fill="#4a5a66"/></g><g transform="translate(571,53)"><path d="M14 0.5 Q26 0 27.5 6 Q22 12 18 14 Q22 16 21 21 Q18 25 12 23.5 Q1 21 0.5 12 Q1 1 14 0.5 Z" fill="#f8dcb0" stroke="#8a6a40" stroke-width="1"/><circle cx="8" cy="8.5" r="2.6" fill="#3aa0e0"/><circle cx="13.5" cy="5.3" r="2.5" fill="#3a9a3a"/><circle cx="8" cy="16" r="2.5" fill="#e02020"/><path d="M11 23.5 L25 7.5 L27.5 9.5 L13.5 25 Z" fill="#a08040" stroke="#6a5020" stroke-width="0.6"/><path d="M24 8 Q26 2 30 2 Q30 6 27 10 Z" fill="#ffffff" stroke="#888" stroke-width="0.8"/><path d="M26.5 25.5 h6 l-3 3 z" fill="#333"/></g><rect x="622.25" y="55" width="1.1" height="1.1" fill="#c2c2c2" /><rect x="625.25" y="55" width="1.1" height="1.1" fill="#c2c2c2" /><rect x="622.25" y="58" width="1.1" height="1.1" fill="#c2c2c2" /><rect x="625.25" y="58" width="1.1" height="1.1" fill="#c2c2c2" /><rect x="622.25" y="61" width="1.1" height="1.1" fill="#c2c2c2" /><rect x="625.25" y="61" width="1.1" height="1.1" fill="#c2c2c2" /><rect x="622.25" y="64" width="1.1" height="1.1" fill="#c2c2c2" /><rect x="625.25" y="64" width="1.1" height="1.1" fill="#c2c2c2" /><rect x="622.25" y="67" width="1.1" height="1.1" fill="#c2c2c2" /><rect x="625.25" y="67" width="1.1" height="1.1" fill="#c2c2c2" /><rect x="622.25" y="70" width="1.1" height="1.1" fill="#c2c2c2" /><rect x="625.25" y="70" width="1.1" height="1.1" fill="#c2c2c2" /><rect x="622.25" y="73" width="1.1" height="1.1" fill="#c2c2c2" /><rect x="625.25" y="73" width="1.1" height="1.1" fill="#c2c2c2" /><g transform="translate(641,55)" fill="#a5d28c" stroke="#5e8f4a" stroke-width="1.2" stroke-linejoin="round"><rect x="0.6" y="0.6" width="5.5" height="18.8"/><path d="M27.4 0.6 L27.4 19.4 L8.5 10 Z"/></g><g transform="translate(684,55)" fill="#a5d28c" stroke="#5e8f4a" stroke-width="1.2" stroke-linejoin="round"><path d="M19.5 0.6 L19.5 19.4 L0.6 10 Z"/><rect x="22" y="0.6" width="5.5" height="18.8"/></g><g transform="translate(731.5,55)" fill="#a5d28c" stroke="#5e8f4a" stroke-width="1.2" stroke-linejoin="round"><path d="M17 0.6 L17 19.4 L0.6 10 Z"/></g><g transform="translate(779,55)" fill="#a5d28c" stroke="#5e8f4a" stroke-width="1.2" stroke-linejoin="round"><path d="M0.6 0.6 L0.6 19.4 L17 10 Z"/></g><g transform="translate(815,55)" fill="#a5d28c" stroke="#5e8f4a" stroke-width="1.2" stroke-linejoin="round"><rect x="0.6" y="0.6" width="5.5" height="18.8"/><path d="M8.5 0.6 L8.5 19.4 L28 10 Z"/></g><g transform="translate(859,55)" fill="#a5d28c" stroke="#5e8f4a" stroke-width="1.2" stroke-linejoin="round"><path d="M0.6 0.6 L0.6 19.4 L19.5 10 Z"/><rect x="21.5" y="0.6" width="5.5" height="18.8"/></g><g transform="translate(904,55)" fill="#a5d28c" stroke="#5e8f4a" stroke-width="1.2" stroke-linejoin="round"><path d="M1 10 v-5.5 h15.5 v-3.8 l7.5 5.3 l-7.5 5.3 v-3.8 h-12 v2.5 Z"/><path d="M24 10.5 v5.5 h-15.5 v3.8 l-7.5 -5.3 l7.5 -5.3 v3.8 h12 v-2.5 Z"/></g><rect x="951.5" y="55" width="1.1" height="1.1" fill="#c2c2c2" /><rect x="954.5" y="55" width="1.1" height="1.1" fill="#c2c2c2" /><rect x="951.5" y="58" width="1.1" height="1.1" fill="#c2c2c2" /><rect x="954.5" y="58" width="1.1" height="1.1" fill="#c2c2c2" /><rect x="951.5" y="61" width="1.1" height="1.1" fill="#c2c2c2" /><rect x="954.5" y="61" width="1.1" height="1.1" fill="#c2c2c2" /><rect x="951.5" y="64" width="1.1" height="1.1" fill="#c2c2c2" /><rect x="954.5" y="64" width="1.1" height="1.1" fill="#c2c2c2" /><rect x="951.5" y="67" width="1.1" height="1.1" fill="#c2c2c2" /><rect x="954.5" y="67" width="1.1" height="1.1" fill="#c2c2c2" /><rect x="951.5" y="70" width="1.1" height="1.1" fill="#c2c2c2" /><rect x="954.5" y="70" width="1.1" height="1.1" fill="#c2c2c2" /><rect x="951.5" y="73" width="1.1" height="1.1" fill="#c2c2c2" /><rect x="954.5" y="73" width="1.1" height="1.1" fill="#c2c2c2" /><text x="962.5" y="71.2" font-size="13" fill="#111" textLength="35.50" lengthAdjust="spacingAndGlyphs" >Time:</text><rect x="1002" y="54" width="99.5" height="23" fill="url(#btn)" stroke="#b0b0b0" stroke-width="1" rx="3" /><rect x="1004" y="55.5" width="69" height="20" fill="#ffffff" stroke="#9a9a9a" stroke-width="1" rx="1" /><text x="1008" y="71" font-size="13.5" fill="#111" >0</text><path d="M1081.5 63 L1091 63 L1086.3 68 Z" fill="#444"/><rect x="1105.5" y="54" width="68" height="23" fill="#ffffff" stroke="#b0b0b0" stroke-width="1" rx="3" /><line x1="1152.5" y1="55" x2="1152.5" y2="76" stroke="#d0d0d0" stroke-width="1" /><text x="1112" y="71.5" font-size="13.5" fill="#111" >0</text><path d="M1157.5 63 L1162.8 58.5 L1168 63 Z" fill="#555"/><path d="M1157.5 68 L1162.8 72 L1168 68 Z" fill="#aaa"/><rect x="1186.9" y="56" width="1.1" height="1.1" fill="#c2c2c2" /><rect x="1189.9" y="56" width="1.1" height="1.1" fill="#c2c2c2" /><rect x="1186.9" y="59" width="1.1" height="1.1" fill="#c2c2c2" /><rect x="1189.9" y="59" width="1.1" height="1.1" fill="#c2c2c2" /><rect x="1186.9" y="62" width="1.1" height="1.1" fill="#c2c2c2" /><rect x="1189.9" y="62" width="1.1" height="1.1" fill="#c2c2c2" /><rect x="1186.9" y="65" width="1.1" height="1.1" fill="#c2c2c2" /><rect x="1189.9" y="65" width="1.1" height="1.1" fill="#c2c2c2" /><rect x="1186.9" y="68" width="1.1" height="1.1" fill="#c2c2c2" /><rect x="1189.9" y="68" width="1.1" height="1.1" fill="#c2c2c2" /><rect x="1186.9" y="71" width="1.1" height="1.1" fill="#c2c2c2" /><rect x="1189.9" y="71" width="1.1" height="1.1" fill="#c2c2c2" /><rect x="1186.9" y="74" width="1.1" height="1.1" fill="#c2c2c2" /><rect x="1189.9" y="74" width="1.1" height="1.1" fill="#c2c2c2" /><g transform="translate(1204.5,55)"><path d="M1 4.5 h5 l2 -3 h7 l2 3 h4 a1.5 1.5 0 0 1 1.5 1.5 v10 a1.5 1.5 0 0 1 -1.5 1.5 h-18.5 a1.5 1.5 0 0 1 -1.5 -1.5 v-10 a1.5 1.5 0 0 1 1.5 -1.5z" fill="#c6c6c6" stroke="#8a8a8a" stroke-width="0.9"/><circle cx="11.5" cy="10.5" r="4.5" fill="#dfe8f0" stroke="#7a8a96" stroke-width="1.2"/><circle cx="11.5" cy="10.5" r="2.6" fill="#b8d8f0"/></g><path d="M1222 70 L1232.5 78.5" stroke="#3a86c0" stroke-width="3" stroke-linecap="round"/><circle cx="1221" cy="69" r="2.5" fill="none" stroke="#3a86c0" stroke-width="1.8"/><g transform="translate(1247.5,55)"><path d="M1 4.5 h5 l2 -3 h7 l2 3 h4 a1.5 1.5 0 0 1 1.5 1.5 v10 a1.5 1.5 0 0 1 -1.5 1.5 h-18.5 a1.5 1.5 0 0 1 -1.5 -1.5 v-10 a1.5 1.5 0 0 1 1.5 -1.5z" fill="#c6c6c6" stroke="#8a8a8a" stroke-width="0.9"/><circle cx="11.5" cy="10.5" r="4.5" fill="#dfe8f0" stroke="#7a8a96" stroke-width="1.2"/><circle cx="11.5" cy="10.5" r="2.6" fill="#b8d8f0"/></g><path d="M1269.5 68 v10 M1264.5 73 h10" stroke="#2a88c8" stroke-width="3.4"/><rect x="6.0" y="95" width="1.1" height="1.1" fill="#c2c2c2" /><rect x="9.0" y="95" width="1.1" height="1.1" fill="#c2c2c2" /><rect x="6.0" y="98" width="1.1" height="1.1" fill="#c2c2c2" /><rect x="9.0" y="98" width="1.1" height="1.1" fill="#c2c2c2" /><rect x="6.0" y="101" width="1.1" height="1.1" fill="#c2c2c2" /><rect x="9.0" y="101" width="1.1" height="1.1" fill="#c2c2c2" /><rect x="6.0" y="104" width="1.1" height="1.1" fill="#c2c2c2" /><rect x="9.0" y="104" width="1.1" height="1.1" fill="#c2c2c2" /><rect x="6.0" y="107" width="1.1" height="1.1" fill="#c2c2c2" /><rect x="9.0" y="107" width="1.1" height="1.1" fill="#c2c2c2" /><rect x="6.0" y="110" width="1.1" height="1.1" fill="#c2c2c2" /><rect x="9.0" y="110" width="1.1" height="1.1" fill="#c2c2c2" /><rect x="6.0" y="113" width="1.1" height="1.1" fill="#c2c2c2" /><rect x="9.0" y="113" width="1.1" height="1.1" fill="#c2c2c2" /><rect x="6.0" y="116" width="1.1" height="1.1" fill="#c2c2c2" /><rect x="9.0" y="116" width="1.1" height="1.1" fill="#c2c2c2" /><rect x="6.0" y="119" width="1.1" height="1.1" fill="#c2c2c2" /><rect x="9.0" y="119" width="1.1" height="1.1" fill="#c2c2c2" /><rect x="16.8" y="92.7" width="41.400000000000006" height="31.5" fill="url(#btnact)" stroke="#a8a8a8" stroke-width="1" rx="3" /><linearGradient id="cbi" x1="0" y1="0" x2="0" y2="1"><stop offset="0" stop-color="#f09838"/><stop offset="0.3" stop-color="#e8d048"/><stop offset="0.55" stop-color="#38b0a8"/><stop offset="0.8" stop-color="#2080d0"/><stop offset="1" stop-color="#503c98"/></linearGradient><rect x="29.7" y="97.7" width="15.599999999999998" height="20.599999999999994" fill="url(#cbi)" stroke="#7a6a80" stroke-width="0.8" /><linearGradient id="hbi" x1="0" y1="0" x2="1" y2="0"><stop offset="0" stop-color="#403c9a"/><stop offset="0.35" stop-color="#2890d0"/><stop offset="0.6" stop-color="#40b898"/><stop offset="1" stop-color="#f0c838"/></linearGradient><rect x="68.3" y="104.7" width="25.900000000000006" height="13.0" fill="url(#hbi)" stroke="#8a7a50" stroke-width="0.8" /><line x1="85.25" y1="104.7" x2="85.25" y2="117.7" stroke="#9a7a40" stroke-width="0.8" /><line x1="81.25" y1="111.2" x2="94.2" y2="111.2" stroke="#9a7a40" stroke-width="0.8" /><ellipse cx="75.4" cy="102.8" rx="7.9" ry="6.1" fill="#a5d28c" stroke="#6e9a5a" stroke-width="0.9"/><linearGradient id="hbi" x1="0" y1="0" x2="1" y2="0"><stop offset="0" stop-color="#403c9a"/><stop offset="0.35" stop-color="#2890d0"/><stop offset="0.6" stop-color="#40b898"/><stop offset="1" stop-color="#f0c838"/></linearGradient><rect x="111.7" y="104.7" width="25.799999999999997" height="13.0" fill="url(#hbi)" stroke="#8a7a50" stroke-width="0.8" /><line x1="128.6" y1="104.7" x2="128.6" y2="117.7" stroke="#9a7a40" stroke-width="0.8" /><line x1="124.6" y1="111.2" x2="137.5" y2="111.2" stroke="#9a7a40" stroke-width="0.8" /><path d="M114 112 Q110 107 116 104.5 L121 103" fill="none" stroke="#111" stroke-width="2.6"/><path d="M121 108 L127 99 Q131 97 132 101 Q131 106 126 108" fill="none" stroke="#111" stroke-width="2.6"/><path d="M113 100 l3 2 M118 97 l0 3 M111 103.5 l3 0" stroke="#2a8ad0" stroke-width="1.2"/><g transform="translate(153.7,98.8)"><path d="M0.5 5 L8 0 L8 3 L22.5 3 L22.5 0 L30 5 L22.5 10 L22.5 7 L8 7 L8 10 Z" fill="#a5d28c" stroke="#5e8f4a" stroke-width="0.9" stroke-linejoin="round"/><path d="M0.8 11 v9 M0.8 15.5 h29.5 M30.2 11 v9 M8 13 v5 M15.5 13 v5 M23 13 v5" stroke="#8a8a8a" stroke-width="1.2" fill="none"/></g><g transform="translate(197,98.8)"><path d="M0.5 5 L8 0 L8 3 L22.5 3 L22.5 0 L30 5 L22.5 10 L22.5 7 L8 7 L8 10 Z" fill="#a5d28c" stroke="#5e8f4a" stroke-width="0.9" stroke-linejoin="round"/><path d="M0.8 11 v9 M0.8 15.5 h29.5 M30.2 11 v9 M8 13 v5 M15.5 13 v5 M23 13 v5" stroke="#8a8a8a" stroke-width="1.2" fill="none"/><text x="19" y="21" font-size="14" font-weight="bold" fill="#111">c</text></g><g transform="translate(241,98.8)"><path d="M0.5 5 L8 0 L8 3 L22.5 3 L22.5 0 L30 5 L22.5 10 L22.5 7 L8 7 L8 10 Z" fill="#d4d4d4" stroke="#a8a8a8" stroke-width="0.9" stroke-linejoin="round"/><path d="M0.8 11 v9 M0.8 15.5 h29.5 M30.2 11 v9 M8 13 v5 M15.5 13 v5 M23 13 v5" stroke="#b4b4b4" stroke-width="1.2" fill="none"/><text x="21" y="21" font-size="14" font-weight="bold" fill="#9a9a9a">t</text></g><g transform="translate(285,98.8)"><path d="M0.5 5 L8 0 L8 3 L22.5 3 L22.5 0 L30 5 L22.5 10 L22.5 7 L8 7 L8 10 Z" fill="#a5d28c" stroke="#5e8f4a" stroke-width="0.9" stroke-linejoin="round"/><path d="M0.8 11 v9 M0.8 15.5 h29.5 M30.2 11 v9 M8 13 v5 M15.5 13 v5 M23 13 v5" stroke="#8a8a8a" stroke-width="1.2" fill="none"/><path d="M17 16 Q23.5 10.5 30 16 Q23.5 21.5 17 16 Z" fill="#111"/><circle cx="23.5" cy="16" r="2" fill="#fff"/><circle cx="23.5" cy="16" r="1" fill="#111"/></g><rect x="323.0" y="95.9" width="203.0" height="24.0" fill="url(#btn)" stroke="#ababab" stroke-width="1" rx="3" /><circle cx="340.6" cy="108.5" r="3.2" fill="#f2c840" stroke="#c8a030" stroke-width="0.6"/><text x="356" y="113.5" font-size="13.5" fill="#111" textLength="39.00" lengthAdjust="spacingAndGlyphs" >vel.e−</text><path d="M506 105.5 L516 105.5 L511 110.5 Z" fill="#333"/><rect x="533.3" y="95.9" width="96.5" height="24.0" fill="url(#btn)" stroke="#ababab" stroke-width="1" rx="3" /><text x="539.7" y="113.5" font-size="13.5" fill="#111" textLength="60.90" lengthAdjust="spacingAndGlyphs" >Magnitud</text><path d="M610.6 105.5 L620.6 105.5 L615.6 110.5 Z" fill="#333"/><rect x="643.8" y="96" width="1.1" height="1.1" fill="#c2c2c2" /><rect x="646.8" y="96" width="1.1" height="1.1" fill="#c2c2c2" /><rect x="643.8" y="99" width="1.1" height="1.1" fill="#c2c2c2" /><rect x="646.8" y="99" width="1.1" height="1.1" fill="#c2c2c2" /><rect x="643.8" y="102" width="1.1" height="1.1" fill="#c2c2c2" /><rect x="646.8" y="102" width="1.1" height="1.1" fill="#c2c2c2" /><rect x="643.8" y="105" width="1.1" height="1.1" fill="#c2c2c2" /><rect x="646.8" y="105" width="1.1" height="1.1" fill="#c2c2c2" /><rect x="643.8" y="108" width="1.1" height="1.1" fill="#c2c2c2" /><rect x="646.8" y="108" width="1.1" height="1.1" fill="#c2c2c2" /><rect x="643.8" y="111" width="1.1" height="1.1" fill="#c2c2c2" /><rect x="646.8" y="111" width="1.1" height="1.1" fill="#c2c2c2" /><rect x="643.8" y="114" width="1.1" height="1.1" fill="#c2c2c2" /><rect x="646.8" y="114" width="1.1" height="1.1" fill="#c2c2c2" /><rect x="643.8" y="117" width="1.1" height="1.1" fill="#c2c2c2" /><rect x="646.8" y="117" width="1.1" height="1.1" fill="#c2c2c2" /><rect x="655.2" y="95.9" width="203.04999999999995" height="24.0" fill="url(#btn)" stroke="#ababab" stroke-width="1" rx="3" /><text x="661.6" y="113.5" font-size="13.5" fill="#111" textLength="51.40" lengthAdjust="spacingAndGlyphs" >Surface</text><path d="M838.75 105.5 L848.75 105.5 L843.75 110.5 Z" fill="#333"/><rect x="871.9" y="96" width="1.1" height="1.1" fill="#c2c2c2" /><rect x="874.9" y="96" width="1.1" height="1.1" fill="#c2c2c2" /><rect x="871.9" y="99" width="1.1" height="1.1" fill="#c2c2c2" /><rect x="874.9" y="99" width="1.1" height="1.1" fill="#c2c2c2" /><rect x="871.9" y="102" width="1.1" height="1.1" fill="#c2c2c2" /><rect x="874.9" y="102" width="1.1" height="1.1" fill="#c2c2c2" /><rect x="871.9" y="105" width="1.1" height="1.1" fill="#c2c2c2" /><rect x="874.9" y="105" width="1.1" height="1.1" fill="#c2c2c2" /><rect x="871.9" y="108" width="1.1" height="1.1" fill="#c2c2c2" /><rect x="874.9" y="108" width="1.1" height="1.1" fill="#c2c2c2" /><rect x="871.9" y="111" width="1.1" height="1.1" fill="#c2c2c2" /><rect x="874.9" y="111" width="1.1" height="1.1" fill="#c2c2c2" /><rect x="871.9" y="114" width="1.1" height="1.1" fill="#c2c2c2" /><rect x="874.9" y="114" width="1.1" height="1.1" fill="#c2c2c2" /><rect x="871.9" y="117" width="1.1" height="1.1" fill="#c2c2c2" /><rect x="874.9" y="117" width="1.1" height="1.1" fill="#c2c2c2" /><g transform="translate(890,96)" stroke="#5a5a50" stroke-width="1.6" fill="#a5d28c"><path d="M4 4 L25.5 20 M25.5 4 L4 20" fill="none"/><path d="M0.5 0.5 L8 1.5 L1.5 7.5 Z M29 0.5 L21.5 1.5 L28 7.5 Z M0.5 23.5 L8 22.5 L1.5 16.5 Z M29 23.5 L21.5 22.5 L28 16.5 Z" stroke="#6e9a5a" stroke-width="0.8"/></g><g transform="translate(932.5,96)" fill="#a5d28c" stroke="#6e9a5a" stroke-width="0.8"><ellipse cx="15" cy="12" rx="4.5" ry="3.5" fill="#3a90d0" stroke="none"/><path d="M10 8 L9 1.5 L7 3.5 L3 0.5 L1 2.5 L5 6 L3 8 Z M20 8 L21 1.5 L23 3.5 L27 0.5 L29 2.5 L25 6 L27 8 Z M10 16 L9 22.5 L7 20.5 L3 23.5 L1 21.5 L5 18 L3 16 Z M20 16 L21 22.5 L23 20.5 L27 23.5 L29 21.5 L25 18 L27 16 Z"/></g><ellipse cx="991.5" cy="108" rx="14.5" ry="11.8" fill="#3a98d8" stroke="#2a6a98" stroke-width="0.8"/><g fill="#a5d28c" stroke="#5e8f4a" stroke-width="0.7"><path d="M984 101 l5 1 l-4 4 z M999 101 l-5 1 l4 4 z M984 115 l5 -1 l-4 -4 z M999 115 l-5 -1 l4 -4 z"/></g><path d="M985 102 L998 114 M998 102 L985 114" stroke="#5a6a50" stroke-width="1.2"/><ellipse cx="1035.5" cy="108" rx="13" ry="11" fill="#3a98d8" stroke="#2a6a98" stroke-width="0.6"/><g fill="#a5d28c" stroke="#5e8f4a" stroke-width="0.7"><path d="M1021.5 96.5 l7 1 l-6 6 z M1049.5 96.5 l-7 1 l6 6 z M1021.5 119.5 l7 -1 l-6 -6 z M1049.5 119.5 l-7 -1 l6 -6 z"/></g><rect x="1065" y="96.5" width="19" height="14" fill="none" stroke="#666" stroke-width="1" stroke-dasharray="3 2"/><circle cx="1077" cy="108" r="6.3" fill="#dce8f4" stroke="#8a8a8a" stroke-width="2"/><path d="M1081.5 112.5 L1092 120" stroke="#8a8a8a" stroke-width="2.8" stroke-linecap="round"/><g transform="translate(1108.75,96)"><text x="0" y="9.5" font-size="10.5" font-weight="bold" fill="#555">+X</text><path d="M18.5 20 v-12 h-3 l6 -7 l6 7 h-3 v12 z" fill="#a5d28c" stroke="#5e8f4a" stroke-width="0.8"/><path d="M20 18.5 h-13 v-3 l-7 5 l7 5 v-3 h13 z" fill="#f2b820" stroke="#9a7a20" stroke-width="0.8"/><rect x="16.5" y="14.5" width="10.5" height="10" fill="#d83a2a" stroke="#8a2a1a" stroke-width="0.7"/></g><g transform="translate(1152.5,96)"><text x="13" y="9.5" font-size="10.5" font-weight="bold" fill="#555">-X</text><path d="M3.5 20 v-12 h-3 l6 -7 l6 7 h-3 v12 z" fill="#a5d28c" stroke="#5e8f4a" stroke-width="0.8"/><path d="M8 18.5 h13 v-3 l7 5 l-7 5 v-3 h-13 z" fill="#f2b820" stroke="#9a7a20" stroke-width="0.8"/><rect x="1" y="14.5" width="10.5" height="10" fill="#d83a2a" stroke="#8a2a1a" stroke-width="0.7"/></g><g transform="translate(1196,96)"><text x="13" y="9.5" font-size="10.5" font-weight="bold" fill="#555">+Y</text><path d="M3.5 20 v-12 h-3 l6 -7 l6 7 h-3 v12 z" fill="#a5d28c" stroke="#5e8f4a" stroke-width="0.8"/><path d="M8 18.5 h14 v-3 l7 5 l-7 5 v-3 h-14 z" fill="#d83a2a" stroke="#8a2a1a" stroke-width="0.8"/><rect x="1" y="14.5" width="10.5" height="10" fill="#f2b820" stroke="#9a7a20" stroke-width="0.7"/></g><g transform="translate(1239.5,96)"><text x="0" y="9.5" font-size="10.5" font-weight="bold" fill="#555">-Y</text><path d="M18.5 20 v-12 h-3 l6 -7 l6 7 h-3 v12 z" fill="#a5d28c" stroke="#5e8f4a" stroke-width="0.8"/><path d="M20 18.5 h-13 v-3 l-7 5 l7 5 v-3 h13 z" fill="#d83a2a" stroke="#8a2a1a" stroke-width="0.8"/><rect x="16.5" y="14.5" width="10.5" height="10" fill="#f2b820" stroke="#9a7a20" stroke-width="0.7"/></g><g transform="translate(1282.5,96)"><text x="0" y="9.5" font-size="10.5" font-weight="bold" fill="#555">+Z</text><path d="M18.5 20 v-12 h-3 l6 -7 l6 7 h-3 v12 z" fill="#f2b820" stroke="#9a7a20" stroke-width="0.8"/><path d="M20 18.5 h-13 v-3 l-7 5 l7 5 v-3 h13 z" fill="#d83a2a" stroke="#8a2a1a" stroke-width="0.8"/><rect x="16.5" y="14.5" width="10.5" height="10" fill="#a5d28c" stroke="#5e8f4a" stroke-width="0.7"/></g><g transform="translate(1327,96)"><text x="13" y="9.5" font-size="10.5" font-weight="bold" fill="#555">-Z</text><path d="M3.5 20 v-12 h-3 l6 -7 l6 7 h-3 v12 z" fill="#f2b820" stroke="#9a7a20" stroke-width="0.8"/><path d="M8 18.5 h14 v-3 l7 5 l-7 5 v-3 h-14 z" fill="#d83a2a" stroke="#8a2a1a" stroke-width="0.8"/><rect x="1" y="14.5" width="10.5" height="10" fill="#a5d28c" stroke="#5e8f4a" stroke-width="0.7"/></g><g transform="translate(1370,96)"><path d="M13.5 14 v-9 h-3 l5 -5 l5 5 h-3 v9 z" fill="#f2b820" stroke="#9a7a20" stroke-width="0.8"/><path d="M15.5 14 L3 21 L1 19 L0.5 24.5 L6 24 L4.5 22.5 L15.5 16 Z" fill="#a5d28c" stroke="#5e8f4a" stroke-width="0.8"/><path d="M15.5 14 L28 21 L30 19 L31 24.5 L25 24 L26.5 22.5 L15.5 16 Z" fill="#d83a2a" stroke="#8a2a1a" stroke-width="0.8"/><path d="M11.5 13 L15.5 11 L19.5 13 L15.5 15.5Z" fill="#f2d040" stroke="#9a7a20" stroke-width="0.6"/></g><g transform="translate(1425,103.2) scale(1,1)"><path d="M-1 6.3 A9.3 6.3 0 1 1 8.6 1.5" fill="none" stroke="#6e9a5a" stroke-width="4.4"/><path d="M-1 6.3 A9.3 6.3 0 1 1 8.6 1.5" fill="none" stroke="#a5d28c" stroke-width="2.6"/><path d="M3.5 0.5 L14 0.5 L8.8 6.5 Z" fill="#a5d28c" stroke="#6e9a5a" stroke-width="0.9"/></g><text x="1424.2" y="119.5" font-size="11" fill="#777" font-weight="bold" textLength="20.00" lengthAdjust="spacingAndGlyphs" >+90</text><g transform="translate(1477,103.2) scale(-1,1)"><path d="M-1 6.3 A9.3 6.3 0 1 1 8.6 1.5" fill="none" stroke="#6e9a5a" stroke-width="4.4"/><path d="M-1 6.3 A9.3 6.3 0 1 1 8.6 1.5" fill="none" stroke="#a5d28c" stroke-width="2.6"/><path d="M3.5 0.5 L14 0.5 L8.8 6.5 Z" fill="#a5d28c" stroke="#6e9a5a" stroke-width="0.9"/></g><text x="1458.8" y="119.5" font-size="11" fill="#777" font-weight="bold" textLength="17.70" lengthAdjust="spacingAndGlyphs" >-90</text><rect x="1507.5" y="97" width="1.1" height="1.1" fill="#c2c2c2" /><rect x="1510.5" y="97" width="1.1" height="1.1" fill="#c2c2c2" /><rect x="1507.5" y="100" width="1.1" height="1.1" fill="#c2c2c2" /><rect x="1510.5" y="100" width="1.1" height="1.1" fill="#c2c2c2" /><rect x="1507.5" y="103" width="1.1" height="1.1" fill="#c2c2c2" /><rect x="1510.5" y="103" width="1.1" height="1.1" fill="#c2c2c2" /><rect x="1507.5" y="106" width="1.1" height="1.1" fill="#c2c2c2" /><rect x="1510.5" y="106" width="1.1" height="1.1" fill="#c2c2c2" /><rect x="1507.5" y="109" width="1.1" height="1.1" fill="#c2c2c2" /><rect x="1510.5" y="109" width="1.1" height="1.1" fill="#c2c2c2" /><rect x="1507.5" y="112" width="1.1" height="1.1" fill="#c2c2c2" /><rect x="1510.5" y="112" width="1.1" height="1.1" fill="#c2c2c2" /><rect x="1507.5" y="115" width="1.1" height="1.1" fill="#c2c2c2" /><rect x="1510.5" y="115" width="1.1" height="1.1" fill="#c2c2c2" /><rect x="1507.5" y="118" width="1.1" height="1.1" fill="#c2c2c2" /><rect x="1510.5" y="118" width="1.1" height="1.1" fill="#c2c2c2" /><rect x="1518.5" y="92.2" width="42.700000000000045" height="32.3" fill="url(#btnact)" stroke="#a8a8a8" stroke-width="1" rx="3" /><g transform="translate(1528,97)"><path d="M6 20 v-13 h-2.5 l4 -5 l4 5 h-2.5 v13 z" fill="#f2b820" stroke="#9a7a20" stroke-width="0.7"/><path d="M7 16 h11 v-2 l5 3.5 l-5 3.5 v-2 h-11z" fill="#d83a2a" stroke="#8a2a1a" stroke-width="0.6"/><path d="M7 17 L2 22 L1 20 L0.5 24.5 L5 24 L3.8 23 L8 19Z" fill="#a5d28c" stroke="#5e8f4a" stroke-width="0.6"/><path d="M13 3.5 Q19 -1 25.5 3.5 Q19 8 13 3.5Z" fill="#ffffff" stroke="#334" stroke-width="0.6"/><circle cx="19.2" cy="3.5" r="2.4" fill="#202a70"/></g><path d="M1594.8 109.5 A11.3 9 0 1 1 1589.5 100.2" fill="none" stroke="#6e9a5a" stroke-width="4.6"/><path d="M1594.8 109.5 A11.3 9 0 1 1 1589.5 100.2" fill="none" stroke="#a5d28c" stroke-width="2.8"/><path d="M1588.0 96.5 L1597.5 96.5 L1597.5 106.5 Z" fill="#a5d28c" stroke="#6e9a5a" stroke-width="0.9"/><ellipse cx="1582.5" cy="108.5" rx="3.8" ry="2.8" fill="#f2c820" stroke="#9a8020" stroke-width="0.6"/><path d="M1638.3 109.5 A11.3 9 0 1 1 1633 100.2" fill="none" stroke="#6e9a5a" stroke-width="4.6"/><path d="M1638.3 109.5 A11.3 9 0 1 1 1633 100.2" fill="none" stroke="#a5d28c" stroke-width="2.8"/><path d="M1631.5 96.5 L1641 96.5 L1641 106.5 Z" fill="#a5d28c" stroke="#6e9a5a" stroke-width="0.9"/><circle cx="1627" cy="108" r="3.3" fill="#f2c820"/><path d="M1621 108 h12 M1627 102 v12" stroke="#c8a020" stroke-width="1"/><path d="M1681.8 109.5 A11.3 9 0 1 1 1676.5 100.2" fill="none" stroke="#6e9a5a" stroke-width="4.6"/><path d="M1681.8 109.5 A11.3 9 0 1 1 1676.5 100.2" fill="none" stroke="#a5d28c" stroke-width="2.8"/><path d="M1675.0 96.5 L1684.5 96.5 L1684.5 106.5 Z" fill="#a5d28c" stroke="#6e9a5a" stroke-width="0.9"/><path d="M1674.5 110 L1682.5 117 L1679.5 117.5 L1681.5 121 L1680.0 121.5 L1678.0 118 L1675.5 119.5 Z" fill="#111"/><rect x="1706.5" y="97" width="1.1" height="1.1" fill="#c2c2c2" /><rect x="1709.5" y="97" width="1.1" height="1.1" fill="#c2c2c2" /><rect x="1706.5" y="100" width="1.1" height="1.1" fill="#c2c2c2" /><rect x="1709.5" y="100" width="1.1" height="1.1" fill="#c2c2c2" /><rect x="1706.5" y="103" width="1.1" height="1.1" fill="#c2c2c2" /><rect x="1709.5" y="103" width="1.1" height="1.1" fill="#c2c2c2" /><rect x="1706.5" y="106" width="1.1" height="1.1" fill="#c2c2c2" /><rect x="1709.5" y="106" width="1.1" height="1.1" fill="#c2c2c2" /><rect x="1706.5" y="109" width="1.1" height="1.1" fill="#c2c2c2" /><rect x="1709.5" y="109" width="1.1" height="1.1" fill="#c2c2c2" /><rect x="1706.5" y="112" width="1.1" height="1.1" fill="#c2c2c2" /><rect x="1709.5" y="112" width="1.1" height="1.1" fill="#c2c2c2" /><rect x="1706.5" y="115" width="1.1" height="1.1" fill="#c2c2c2" /><rect x="1709.5" y="115" width="1.1" height="1.1" fill="#c2c2c2" /><rect x="1706.5" y="118" width="1.1" height="1.1" fill="#c2c2c2" /><rect x="1709.5" y="118" width="1.1" height="1.1" fill="#c2c2c2" /><rect x="1717.2" y="92.2" width="42.299999999999955" height="32.3" fill="url(#btnact)" stroke="#a8a8a8" stroke-width="1" rx="3" /><g transform="translate(1738.3,108)"><path d="M-5.5 0 A6 6.2 0 1 1 5.5 0 Q3 3 3 6 h-6 Q-3 3 -5.5 0Z" fill="#f2c020" stroke="#a88010" stroke-width="0.8"/><rect x="-3" y="6.5" width="6" height="3.5" fill="#999"/><path d="M-12 -2 h4 M8 -2 h4 M-9 -10 l3 3 M9 -10 l-3 3 M0 -15 v3" stroke="#8a8a8a" stroke-width="1"/></g><rect x="1774.2" y="97" width="1.1" height="1.1" fill="#c2c2c2" /><rect x="1777.2" y="97" width="1.1" height="1.1" fill="#c2c2c2" /><rect x="1774.2" y="100" width="1.1" height="1.1" fill="#c2c2c2" /><rect x="1777.2" y="100" width="1.1" height="1.1" fill="#c2c2c2" /><rect x="1774.2" y="103" width="1.1" height="1.1" fill="#c2c2c2" /><rect x="1777.2" y="103" width="1.1" height="1.1" fill="#c2c2c2" /><rect x="1774.2" y="106" width="1.1" height="1.1" fill="#c2c2c2" /><rect x="1777.2" y="106" width="1.1" height="1.1" fill="#c2c2c2" /><rect x="1774.2" y="109" width="1.1" height="1.1" fill="#c2c2c2" /><rect x="1777.2" y="109" width="1.1" height="1.1" fill="#c2c2c2" /><rect x="1774.2" y="112" width="1.1" height="1.1" fill="#c2c2c2" /><rect x="1777.2" y="112" width="1.1" height="1.1" fill="#c2c2c2" /><rect x="1774.2" y="115" width="1.1" height="1.1" fill="#c2c2c2" /><rect x="1777.2" y="115" width="1.1" height="1.1" fill="#c2c2c2" /><rect x="1774.2" y="118" width="1.1" height="1.1" fill="#c2c2c2" /><rect x="1777.2" y="118" width="1.1" height="1.1" fill="#c2c2c2" /><rect x="6.0" y="139" width="1.1" height="1.1" fill="#c2c2c2" /><rect x="9.0" y="139" width="1.1" height="1.1" fill="#c2c2c2" /><rect x="6.0" y="142" width="1.1" height="1.1" fill="#c2c2c2" /><rect x="9.0" y="142" width="1.1" height="1.1" fill="#c2c2c2" /><rect x="6.0" y="145" width="1.1" height="1.1" fill="#c2c2c2" /><rect x="9.0" y="145" width="1.1" height="1.1" fill="#c2c2c2" /><rect x="6.0" y="148" width="1.1" height="1.1" fill="#c2c2c2" /><rect x="9.0" y="148" width="1.1" height="1.1" fill="#c2c2c2" /><rect x="6.0" y="151" width="1.1" height="1.1" fill="#c2c2c2" /><rect x="9.0" y="151" width="1.1" height="1.1" fill="#c2c2c2" /><rect x="6.0" y="154" width="1.1" height="1.1" fill="#c2c2c2" /><rect x="9.0" y="154" width="1.1" height="1.1" fill="#c2c2c2" /><rect x="6.0" y="157" width="1.1" height="1.1" fill="#c2c2c2" /><rect x="9.0" y="157" width="1.1" height="1.1" fill="#c2c2c2" /><rect x="6.0" y="160" width="1.1" height="1.1" fill="#c2c2c2" /><rect x="9.0" y="160" width="1.1" height="1.1" fill="#c2c2c2" /><g transform="translate(25.7,138.8)" fill="#cfcfcf" stroke="#9a9a9a" stroke-width="1.1"><rect x="0.5" y="0.5" width="23" height="23.5" rx="3" fill="#e8e8e8"/><rect x="3.5" y="3.5" width="17" height="4.5" rx="1" fill="#fafafa"/><circle cx="5.5" cy="12.0" r="1.7" fill="#a8a8a8" stroke="none"/><circle cx="5.5" cy="17.5" r="1.7" fill="#a8a8a8" stroke="none"/><circle cx="5.5" cy="23.0" r="1.7" fill="#a8a8a8" stroke="none"/><circle cx="12.0" cy="12.0" r="1.7" fill="#a8a8a8" stroke="none"/><circle cx="12.0" cy="17.5" r="1.7" fill="#a8a8a8" stroke="none"/><circle cx="12.0" cy="23.0" r="1.7" fill="#a8a8a8" stroke="none"/><circle cx="18.5" cy="12.0" r="1.7" fill="#a8a8a8" stroke="none"/><circle cx="18.5" cy="17.5" r="1.7" fill="#a8a8a8" stroke="none"/><circle cx="18.5" cy="23.0" r="1.7" fill="#a8a8a8" stroke="none"/></g><g transform="translate(67.7,138.8)" fill="#cfcfcf" stroke="#9a9a9a" stroke-width="1.1"><ellipse cx="15" cy="12" rx="14" ry="10.5" transform="rotate(25 15 12)" fill="#c0c0c0"/><ellipse cx="13" cy="10.5" rx="9.5" ry="6.5" transform="rotate(25 13 10.5)" fill="#d8d8d8"/><ellipse cx="12" cy="10" rx="5" ry="3.2" transform="rotate(25 12 10)" fill="#c8c8c8"/></g><g transform="translate(113.75,138.8)"><path d="M0.5 2.6 L14 1 L17 16 L5 20 L0.5 16.2 Z" fill="#a8a8a8" stroke="none"/><path d="M5 6 L18 5 L21 15 L7 19.5 Z" fill="#c4c4c4" stroke="none"/><path d="M0.5 2.6 L14.7 0.3 L28.7 3 L11.4 7.2 Z M0.5 2.6 V16.2 L11.4 23.7 L28.7 18 V3 M11.4 7.2 V23.7" fill="none" stroke="#9a9a9a" stroke-width="1.1" stroke-linejoin="round"/></g><g transform="translate(158.4,138.8)"><path d="M5 3 L21.5 2.5 L22.5 15.5 L7.5 21 Z" fill="#c0c0c0" stroke="#a0a0a0" stroke-width="0.8"/><path d="M0.5 2.6 L14.7 0.3 L28.7 3 L11.4 7.2 Z M0.5 2.6 V16.2 L11.4 23.7 L28.7 18 V3 M11.4 7.2 V23.7" fill="none" stroke="#9a9a9a" stroke-width="1.1" stroke-linejoin="round"/></g><g transform="translate(203,138.8)"><path d="M1.5 5 L9 4 L9.5 12 L2 13 Z" fill="#b4b4b4" stroke="none"/><path d="M13.5 4 L21 3.5 L27.5 5 L27.5 16 L20 19 L13.5 17 Z" fill="#bcbcbc" stroke="none"/><path d="M18 4 v14" stroke="#f0f0f0" stroke-width="2"/><path d="M0.5 2.6 L14.7 0.3 L28.7 3 L11.4 7.2 Z M0.5 2.6 V16.2 L11.4 23.7 L28.7 18 V3 M11.4 7.2 V23.7" fill="none" stroke="#9a9a9a" stroke-width="1.1" stroke-linejoin="round"/></g><g transform="translate(248.6,138.8)"><path d="M0.5 2.6 L14.7 0.3 L28.7 3 L11.4 7.2 Z" fill="#e8e8e8" stroke="none"/><path d="M0.5 2.6 V16.2 L11.4 23.7 V7.2Z" fill="#e4e4e4" stroke="none"/><path d="M11.4 7.2 L28.7 3 V18 L11.4 23.7 Z" fill="#ececec" stroke="none"/><path d="M5 5 L14 3.5 L21 5 L21 15 L12 17.5 L5 14 Z" fill="#a4a4a4" stroke="none"/><path d="M12 8 L21 5 V15 L12 17.5 Z" fill="#bcbcbc" stroke="none"/><path d="M0.5 2.6 L14.7 0.3 L28.7 3 L11.4 7.2 Z M0.5 2.6 V16.2 L11.4 23.7 L28.7 18 V3 M11.4 7.2 V23.7" fill="none" stroke="#9a9a9a" stroke-width="1.1" stroke-linejoin="round"/></g><g transform="translate(293,138.8)" fill="#cfcfcf" stroke="#9a9a9a" stroke-width="1.1"><ellipse cx="15" cy="12" rx="13.5" ry="11" fill="none"/><ellipse cx="15" cy="12" rx="7" ry="5" fill="#e0e0e0"/><circle cx="15" cy="2.5" r="2.5" fill="#c0c0c0"/><circle cx="15" cy="21.5" r="2.5" fill="#c0c0c0"/><circle cx="3" cy="12" r="2.5" fill="#c0c0c0"/><circle cx="27" cy="12" r="2.5" fill="#c0c0c0"/><circle cx="8" cy="7" r="2" fill="#c0c0c0"/><circle cx="22" cy="7" r="2" fill="#c0c0c0"/><circle cx="8" cy="17" r="2" fill="#c0c0c0"/><circle cx="22" cy="17" r="2" fill="#c0c0c0"/></g><g transform="translate(340,138.8)" fill="#cfcfcf" stroke="#9a9a9a" stroke-width="1.1"><ellipse cx="11" cy="12" rx="5.5" ry="4.5" fill="#b8b8b8"/><path d="M1 6 Q12 0 27 5 M3 3 Q14 -2 26 1.5 M17 11 Q22 9 27 11 M1 18 Q12 24 27 19 M3 21 Q14 26 26 22.5 M17 14 Q22 16 27 14" fill="none"/></g><g transform="translate(383.3,138.8)" fill="#cfcfcf" stroke="#9a9a9a" stroke-width="1.1"><path d="M0.8 12 H28.3 V20.5 H0.8 Z" fill="#e6e6e6"/><path d="M0.8 12 Q12 11.5 17.7 4.5 Q23 3 27.7 6.5 Q22 17 7.2 20 L0.8 20.5 Z" fill="#c4c4c4"/></g><g transform="translate(430.7,138.8)" fill="#cfcfcf" stroke="#9a9a9a" stroke-width="1.1"><ellipse cx="13" cy="12.5" rx="12.5" ry="11" fill="#fafafa"/><circle cx="8.5" cy="8.5" r="3" fill="none"/><circle cx="15.5" cy="14" r="4.5" fill="#c0c0c0"/><circle cx="6.5" cy="16.5" r="1.8" fill="none"/></g><g transform="translate(472.6,138.8)" fill="#cfcfcf" stroke="#9a9a9a" stroke-width="1.1"><circle cx="4.5" cy="4" r="3.5" fill="#fafafa"/><ellipse cx="17" cy="14" rx="12" ry="10" fill="#fafafa"/><circle cx="21" cy="14" r="4.5" fill="#c0c0c0"/><circle cx="13" cy="17" r="2" fill="none"/></g><rect x="523.5" y="139" width="1.1" height="1.1" fill="#c2c2c2" /><rect x="526.5" y="139" width="1.1" height="1.1" fill="#c2c2c2" /><rect x="523.5" y="142" width="1.1" height="1.1" fill="#c2c2c2" /><rect x="526.5" y="142" width="1.1" height="1.1" fill="#c2c2c2" /><rect x="523.5" y="145" width="1.1" height="1.1" fill="#c2c2c2" /><rect x="526.5" y="145" width="1.1" height="1.1" fill="#c2c2c2" /><rect x="523.5" y="148" width="1.1" height="1.1" fill="#c2c2c2" /><rect x="526.5" y="148" width="1.1" height="1.1" fill="#c2c2c2" /><rect x="523.5" y="151" width="1.1" height="1.1" fill="#c2c2c2" /><rect x="526.5" y="151" width="1.1" height="1.1" fill="#c2c2c2" /><rect x="523.5" y="154" width="1.1" height="1.1" fill="#c2c2c2" /><rect x="526.5" y="154" width="1.1" height="1.1" fill="#c2c2c2" /><rect x="523.5" y="157" width="1.1" height="1.1" fill="#c2c2c2" /><rect x="526.5" y="157" width="1.1" height="1.1" fill="#c2c2c2" /><rect x="523.5" y="160" width="1.1" height="1.1" fill="#c2c2c2" /><rect x="526.5" y="160" width="1.1" height="1.1" fill="#c2c2c2" /><g transform="translate(543.9,138.8)" fill="#cfcfcf" stroke="#9a9a9a" stroke-width="1.1"><path d="M1 2 v21 h22" fill="none"/><rect x="8" y="6" width="6" height="9" fill="#e4e4e4"/><path d="M11 2 v4 M11 15 v5 M8.5 2 h5 M8.5 20 h5 M8 10.5 h6" fill="none"/></g><g transform="translate(587,138.8)" fill="#cfcfcf" stroke="#9a9a9a" stroke-width="1.1"><rect x="1" y="1" width="17" height="17" fill="#e8e8e8"/><rect x="11" y="11" width="15" height="13" fill="#f0f0f0" stroke="none"/><path d="M11 18 v-7 h7" fill="none"/><rect x="16" y="14" width="10" height="9" fill="#c0c0c0" stroke="none"/></g><g transform="translate(629,136.5)" fill="#cfcfcf" stroke="#9a9a9a" stroke-width="1.1"><path d="M1.5 1 v25" fill="none" stroke-width="1.3"/><rect x="4" y="15" width="5" height="11" fill="#a8a8a8" stroke="none"/><rect x="9" y="9" width="5" height="17" fill="#b8b8b8" stroke="none"/><rect x="14" y="2" width="5" height="24" fill="#c0c0c0" stroke="none"/><rect x="19" y="10" width="5" height="16" fill="#c8c8c8" stroke="none"/><rect x="24" y="18" width="8" height="8" fill="#d0d0d0" stroke="none"/><path d="M1.5 26 h31" stroke-width="1.3"/></g><g transform="translate(676.6,139.5)" fill="#cfcfcf" stroke="#9a9a9a" stroke-width="1.1"><circle cx="5" cy="5" r="4.5" fill="#fafafa"/><path d="M5 2 v3 h2" fill="none"/><ellipse cx="20" cy="5" rx="6" ry="4.5" fill="#c0c0c0"/><path d="M1 22 h27 M2 20 l2 -5 l2 5 l2 -5 l2 5 l2 -5 l2 5 l2 -5 l2 5 l2 -5 l2 5 l2 -5 l2 5" fill="none" stroke-width="1"/></g><g transform="translate(722.6,138.8)" fill="#cfcfcf" stroke="#9a9a9a" stroke-width="1.1"><path d="M2 4 L22 1 L28 6 L22 24 L4 24 Z" fill="#c8c8c8"/><path d="M1 20 L28 4 M3 17 l3 3 l2 -4 l3 3 l2 -4 l3 3 l2 -4 l3 3 l2 -4 l3 3" fill="none" stroke="#888"/></g><g transform="translate(767.3,139.5)" fill="#cfcfcf" stroke="#9a9a9a" stroke-width="1.1"><circle cx="5" cy="5" r="4.5" fill="#fafafa"/><path d="M5 2 v3 h2" fill="none"/><rect x="15" y="0.5" width="11" height="9" fill="none" stroke-dasharray="2 1.5"/><path d="M18 8 l2.5 -5 l2.5 5z" fill="#c0c0c0"/><path d="M1 22 h27 M2 20 l2 -5 l2 5 l2 -5 l2 5 l2 -5 l2 5 l2 -5 l2 5 l2 -5 l2 5 l2 -5 l2 5" fill="none" stroke-width="1"/></g><g transform="translate(812,138.8)" opacity="0.55"><path d="M14.5 0.5 L29 5 L29 20 L14.5 24.5 L0.5 20 L0.5 5 Z" fill="#dcdcdc" stroke="#c8c8c8"/><path d="M14.5 3 v19 M5 7 L24 18 M24 7 L5 18" stroke="#a0a0a0" stroke-width="1.1"/></g><text x="856" y="157" font-size="17" fill="#9a9a9a" font-weight="bold" textLength="30.50" lengthAdjust="spacingAndGlyphs" >{...}</text><rect x="906.5" y="139" width="1.1" height="1.1" fill="#c2c2c2" /><rect x="909.5" y="139" width="1.1" height="1.1" fill="#c2c2c2" /><rect x="906.5" y="142" width="1.1" height="1.1" fill="#c2c2c2" /><rect x="909.5" y="142" width="1.1" height="1.1" fill="#c2c2c2" /><rect x="906.5" y="145" width="1.1" height="1.1" fill="#c2c2c2" /><rect x="909.5" y="145" width="1.1" height="1.1" fill="#c2c2c2" /><rect x="906.5" y="148" width="1.1" height="1.1" fill="#c2c2c2" /><rect x="909.5" y="148" width="1.1" height="1.1" fill="#c2c2c2" /><rect x="906.5" y="151" width="1.1" height="1.1" fill="#c2c2c2" /><rect x="909.5" y="151" width="1.1" height="1.1" fill="#c2c2c2" /><rect x="906.5" y="154" width="1.1" height="1.1" fill="#c2c2c2" /><rect x="909.5" y="154" width="1.1" height="1.1" fill="#c2c2c2" /><rect x="906.5" y="157" width="1.1" height="1.1" fill="#c2c2c2" /><rect x="909.5" y="157" width="1.1" height="1.1" fill="#c2c2c2" /><rect x="906.5" y="160" width="1.1" height="1.1" fill="#c2c2c2" /><rect x="909.5" y="160" width="1.1" height="1.1" fill="#c2c2c2" /><g transform="translate(923,138.8)"><path d="M0.5 18 L25 0.5 L30.5 7 L6 24.5 Z" fill="#f2c020" stroke="#8a7010" stroke-width="1"/><path d="M7 14 l2 2.5 M10 12 l2.5 3.5 M13 9.5 l2 2.5 M16 7.5 l2.5 3.5 M19 5 l2 2.5 M22 3 l2.5 3.5" stroke="#6a5010" stroke-width="0.9"/></g><g transform="translate(986.5,154.5) rotate(-37.5)"><path d="M-14.5 0 A14.5 14.5 0 0 1 14.5 0 Z" fill="#f2c41a" stroke="#6a5a20" stroke-width="1.1"/><path d="M-7 -1 A7 7 0 0 1 7 -1 Z" fill="#f6f6f6" stroke="#6a5a20" stroke-width="1"/><path d="M-12 -3 l2 1 M-9 -9 l1.5 1.5 M0 -12.5 v2 M9 -9 l-1.5 1.5 M12 -3 l-2 1" stroke="#6a5010" stroke-width="0.8"/></g><g transform="translate(503,206.5)"><path d="M1 4.5 h5 l2 -3 h7 l2 3 h4 a1.5 1.5 0 0 1 1.5 1.5 v10 a1.5 1.5 0 0 1 -1.5 1.5 h-18.5 a1.5 1.5 0 0 1 -1.5 -1.5 v-10 a1.5 1.5 0 0 1 1.5 -1.5z" fill="#c6c6c6" stroke="#8a8a8a" stroke-width="0.9"/><circle cx="11.5" cy="10.5" r="4.5" fill="#dfe8f0" stroke="#7a8a96" stroke-width="1.2"/><circle cx="11.5" cy="10.5" r="2.6" fill="#b8d8f0"/></g><path d="M504 225 Q506 217 514 219 Q519 220 518 226" fill="none" stroke="#d81a1a" stroke-width="3"/><path d="M502 220 L504.5 227 L509 221 Z" fill="#d81a1a"/><g opacity="0.45"><g transform="translate(539.5,206.5)"><path d="M1 4.5 h5 l2 -3 h7 l2 3 h4 a1.5 1.5 0 0 1 1.5 1.5 v10 a1.5 1.5 0 0 1 -1.5 1.5 h-18.5 a1.5 1.5 0 0 1 -1.5 -1.5 v-10 a1.5 1.5 0 0 1 1.5 -1.5z" fill="#c6c6c6" stroke="#8a8a8a" stroke-width="0.9"/><circle cx="11.5" cy="10.5" r="4.5" fill="#dfe8f0" stroke="#7a8a96" stroke-width="1.2"/><circle cx="11.5" cy="10.5" r="2.6" fill="#b8d8f0"/></g></g><path d="M546 222 Q549 218 553 220" fill="none" stroke="#aaa" stroke-width="2"/><line x1="573.0" y1="207" x2="573.0" y2="226" stroke="#d2d2d2" stroke-width="1" /><g transform="translate(582,207.5)"><path d="M1 4.5 h5 l2 -3 h7 l2 3 h4 a1.5 1.5 0 0 1 1.5 1.5 v10 a1.5 1.5 0 0 1 -1.5 1.5 h-18.5 a1.5 1.5 0 0 1 -1.5 -1.5 v-10 a1.5 1.5 0 0 1 1.5 -1.5z" fill="#c6c6c6" stroke="#8a8a8a" stroke-width="0.9"/><circle cx="11.5" cy="10.5" r="4.5" fill="#dfe8f0" stroke="#7a8a96" stroke-width="1.2"/><circle cx="11.5" cy="10.5" r="2.6" fill="#b8d8f0"/></g><path d="M582.5 211 v-3 h3 M602 208 h3 v3 M582.5 222 v3 h3 M602 225 h3 v-3" fill="none" stroke="#8a8a8a" stroke-width="1"/><line x1="617.0" y1="207" x2="617.0" y2="226" stroke="#d2d2d2" stroke-width="1" /><text x="628.5" y="220" font-size="13.5" fill="#5a5a5a" font-weight="bold" textLength="18.50" lengthAdjust="spacingAndGlyphs" >3D</text><g transform="translate(661.5,206.5)"><path d="M1 4.5 h5 l2 -3 h7 l2 3 h4 a1.5 1.5 0 0 1 1.5 1.5 v10 a1.5 1.5 0 0 1 -1.5 1.5 h-18.5 a1.5 1.5 0 0 1 -1.5 -1.5 v-10 a1.5 1.5 0 0 1 1.5 -1.5z" fill="#c6c6c6" stroke="#8a8a8a" stroke-width="0.9"/><circle cx="11.5" cy="10.5" r="4.5" fill="#dfe8f0" stroke="#7a8a96" stroke-width="1.2"/><circle cx="11.5" cy="10.5" r="2.6" fill="#b8d8f0"/></g><path d="M674 218 L683.5 225.5" stroke="#d8b020" stroke-width="3" stroke-linecap="round"/><line x1="696.0" y1="207" x2="696.0" y2="226" stroke="#d2d2d2" stroke-width="1" /><rect x="706.5" y="207.5" width="21" height="18" fill="none" stroke="#7c7c7c" stroke-width="1" stroke-dasharray="2.6 2.8"/><path d="M715.4 211.0 h3.2 v3.9 h3.9 v3.2 h-3.9 v3.9 h-3.2 v-3.9 h-3.9 v-3.2 h3.9 z" fill="#a5d28c" stroke="#5e8f4a" stroke-width="0.9"/><rect x="741.5" y="207.5" width="21.5" height="18" fill="none" stroke="#7c7c7c" stroke-width="1" stroke-dasharray="2.6 2.8"/><rect x="746.3" y="214.9" width="12" height="3.2" fill="#c82424" stroke="#a01a1a" stroke-width="0.5" /><rect x="777.5" y="207.5" width="20.5" height="18" fill="none" stroke="#7c7c7c" stroke-width="1" stroke-dasharray="2.6 2.8"/><path d="M784.4 208.5 h3.2 v2.9 h2.9 v3.2 h-2.9 v2.9 h-3.2 v-2.9 h-2.9 v-3.2 h2.9 z" fill="#a5d28c" stroke="#5e8f4a" stroke-width="0.9"/><rect x="781.0" y="219.4" width="10" height="3.2" fill="#c82424" stroke="#a01a1a" stroke-width="0.5" /><path d="M792 218 L799 220.5 L796.5 221.8 L800 225.5 L798.5 227 L795 223.3 L793.8 225.5 Z" fill="#3a3a3a"/><line x1="810.5" y1="207" x2="810.5" y2="226" stroke="#d2d2d2" stroke-width="1" /><rect x="821.5" y="207.5" width="20.5" height="18" fill="none" stroke="#7c7c7c" stroke-width="1" stroke-dasharray="2.6 2.8"/><path d="M822.5 222 L830.5 209 L838.5 222 Z" fill="#a5d28c" stroke="#5e8f4a" stroke-width="0.9"/><path d="M835 219 L842 221.5 L839.5 222.8 L843 226.5 L841.5 228 L838 224.3 L836.8 226.5 Z" fill="#3a3a3a"/><rect x="856.5" y="207.5" width="21" height="18" fill="none" stroke="#7c7c7c" stroke-width="1" stroke-dasharray="2.6 2.8"/><path d="M861 219 L867.5 210 L874 219" fill="none" stroke="#999" stroke-width="0.8"/><circle cx="867.5" cy="210.5" r="1.6" fill="#b03030"/><circle cx="861" cy="219" r="1.6" fill="#b03030"/><path d="M872 218 L879 220.5 L876.5 221.8 L880 225.5 L878.5 227 L875 223.3 L873.8 225.5 Z" fill="#3a3a3a"/><rect x="892.5" y="207.5" width="13" height="12" fill="none" stroke="#7c7c7c" stroke-width="1" stroke-dasharray="2.6 2.8"/><path d="M895 214 L905 209 L914 212 L914 217 L904 222 L895 219 Z" fill="#a5d28c" stroke="#5e8f4a" stroke-width="0.8"/><path d="M895 214 L904 217 L914 212 M904 217 v5" fill="none" stroke="#5e8f4a" stroke-width="0.8"/><path d="M903 221 L910 223.5 L907.5 224.8 L911 228.5 L909.5 230 L906 226.3 L904.8 228.5 Z" fill="#3a3a3a"/><path d="M932 213 l3.5 3 l-3.5 3 M937 213 l3.5 3 l-3.5 3" fill="none" stroke="#333" stroke-width="1.3"/><text x="946" y="220.5" font-size="13.5" fill="#111" font-weight="bold" textLength="91.80" lengthAdjust="spacingAndGlyphs" >RenderView1</text><line x1="946" y1="222.5" x2="1037.8" y2="222.5" stroke="#111" stroke-width="1.3" /><rect x="1054.25" y="204.0" width="33.65000000000009" height="24.5" fill="url(#btn)" stroke="#b0b0b0" stroke-width="1" rx="3" /><rect x="1091.8" y="204.0" width="32.700000000000045" height="24.5" fill="url(#btn)" stroke="#b0b0b0" stroke-width="1" rx="3" /><rect x="1128.3" y="204.0" width="33.200000000000045" height="24.5" fill="url(#btn)" stroke="#b0b0b0" stroke-width="1" rx="3" /><rect x="1165.3" y="204.0" width="32.700000000000045" height="24.5" fill="url(#btn)" stroke="#b0b0b0" stroke-width="1" rx="3" /><rect x="1062.575" y="208.5" width="17" height="14.5" fill="#c8d0e8" stroke="#8a94a8" stroke-width="1" /><line x1="1071.075" y1="208.5" x2="1071.075" y2="223" stroke="#8a94a8" stroke-width="1.2" /><rect x="1099.65" y="208.5" width="17" height="14.5" fill="#c8d0e8" stroke="#8a94a8" stroke-width="1" /><line x1="1099.65" y1="215.75" x2="1116.65" y2="215.75" stroke="#8a94a8" stroke-width="1.2" /><rect x="1133.4" y="207.5" width="23" height="18" fill="#f6f6f6" stroke="#2a2a2a" stroke-width="2.6" /><rect x="1133.4" y="206.5" width="23" height="4.5" fill="#2a2a2a" /><rect x="1175.15" y="210.5" width="13" height="11.5" fill="#f0f0f0" stroke="#707070" stroke-width="1.2" rx="2.5" /><line x1="1178.3500000000001" y1="213.2" x2="1184.95" y2="219.3" stroke="#4a4a4a" stroke-width="2" /><line x1="1184.95" y1="213.2" x2="1178.3500000000001" y2="219.3" stroke="#4a4a4a" stroke-width="2" /><g transform="translate(1212,207.5)"><path d="M1 4.5 h5 l2 -3 h7 l2 3 h4 a1.5 1.5 0 0 1 1.5 1.5 v10 a1.5 1.5 0 0 1 -1.5 1.5 h-18.5 a1.5 1.5 0 0 1 -1.5 -1.5 v-10 a1.5 1.5 0 0 1 1.5 -1.5z" fill="#c6c6c6" stroke="#8a8a8a" stroke-width="0.9"/><circle cx="11.5" cy="10.5" r="4.5" fill="#dfe8f0" stroke="#7a8a96" stroke-width="1.2"/><circle cx="11.5" cy="10.5" r="2.6" fill="#b8d8f0"/></g><path d="M1211.5 211 v-3 h3 M1232 208 h3 v3 M1211.5 222 v3 h3 M1232 225 h3 v-3" fill="none" stroke="#8a8a8a" stroke-width="1"/><line x1="1245.5" y1="207" x2="1245.5" y2="226" stroke="#d2d2d2" stroke-width="1" /><rect x="1256.0" y="207.5" width="21.5" height="18" fill="none" stroke="#7c7c7c" stroke-width="1" stroke-dasharray="2.6 2.8"/><path d="M1265.1000000000001 211.0 h3.2 v3.9 h3.9 v3.2 h-3.9 v3.9 h-3.2 v-3.9 h-3.9 v-3.2 h3.9 z" fill="#a5d28c" stroke="#5e8f4a" stroke-width="0.9"/><rect x="1291.5" y="207.5" width="21" height="18" fill="none" stroke="#7c7c7c" stroke-width="1" stroke-dasharray="2.6 2.8"/><rect x="1296.0" y="214.9" width="12" height="3.2" fill="#c82424" stroke="#a01a1a" stroke-width="0.5" /><rect x="1326.9" y="207.5" width="21.5" height="18" fill="none" stroke="#7c7c7c" stroke-width="1" stroke-dasharray="2.6 2.8"/><path d="M1333.4 208.5 h3.2 v2.9 h2.9 v3.2 h-2.9 v2.9 h-3.2 v-2.9 h-2.9 v-3.2 h2.9 z" fill="#a5d28c" stroke="#5e8f4a" stroke-width="0.9"/><rect x="1330.0" y="219.4" width="10" height="3.2" fill="#c82424" stroke="#a01a1a" stroke-width="0.5" /><path d="M1341 218 L1348 220.5 L1345.5 221.8 L1349 225.5 L1347.5 227 L1344 223.3 L1342.8 225.5 Z" fill="#3a3a3a"/><line x1="1359.9" y1="207" x2="1359.9" y2="226" stroke="#d2d2d2" stroke-width="1" /><g fill="#a84848"><circle cx="1373" cy="211" r="1.9"/><circle cx="1378" cy="215" r="1.9"/><circle cx="1384" cy="211" r="1.9"/><circle cx="1373" cy="218" r="1.9"/><circle cx="1379" cy="221" r="1.9"/><circle cx="1385" cy="218" r="1.9"/><circle cx="1389" cy="214" r="1.9"/></g><path d="M1369 212 Q1375 205 1388 208 Q1394 215 1389 223 Q1380 227 1370 221 Z" fill="none" stroke="#888" stroke-width="0.8" stroke-dasharray="2 1.6"/><rect x="1406.0" y="207.5" width="21.5" height="18" fill="none" stroke="#7c7c7c" stroke-width="1" stroke-dasharray="2.6 2.8"/><path d="M1419 217 L1426 224 L1424 225.5 L1417.5 219 L1417 223 L1414.5 215 L1422 215.5 Z" fill="#a5d28c" stroke="#5e8f4a" stroke-width="0.8"/><g opacity="0.6"><path d="M1444.5 211 h17 l-1.5 15 h-14 z" fill="#c0c0c0" stroke="#9a9a9a" stroke-width="0.8"/><rect x="1443.5" y="207.5" width="19" height="3.5" rx="1.5" fill="#c8c8c8" stroke="#9a9a9a" stroke-width="0.8"/><path d="M1449 213 v11 M1453 213 v11 M1457 213 v11" stroke="#a8a8a8" stroke-width="0.9"/></g><text x="1636.8" y="220.7" font-size="12.5" fill="#111" textLength="106.90" lengthAdjust="spacingAndGlyphs" >LineChartView1</text><rect x="1761.1" y="204.0" width="33.40000000000009" height="24.5" fill="url(#btn)" stroke="#b0b0b0" stroke-width="1" rx="3" /><rect x="1797.9" y="204.0" width="33.09999999999991" height="24.5" fill="url(#btn)" stroke="#b0b0b0" stroke-width="1" rx="3" /><rect x="1834.9" y="204.0" width="33.09999999999991" height="24.5" fill="url(#btn)" stroke="#b0b0b0" stroke-width="1" rx="3" /><rect x="1871.5" y="204.0" width="34" height="24.5" fill="url(#btn)" stroke="#b0b0b0" stroke-width="1" rx="3" /><rect x="1769.3" y="208.5" width="17" height="14.5" fill="#c8d0e8" stroke="#8a94a8" stroke-width="1" /><line x1="1777.8" y1="208.5" x2="1777.8" y2="223" stroke="#8a94a8" stroke-width="1.2" /><rect x="1805.95" y="208.5" width="17" height="14.5" fill="#c8d0e8" stroke="#8a94a8" stroke-width="1" /><line x1="1805.95" y1="215.75" x2="1822.95" y2="215.75" stroke="#8a94a8" stroke-width="1.2" /><rect x="1839.95" y="207.5" width="23" height="18" fill="#f6f6f6" stroke="#2a2a2a" stroke-width="2.6" /><rect x="1839.95" y="206.5" width="23" height="4.5" fill="#2a2a2a" /><rect x="1882.0" y="210.5" width="13" height="11.5" fill="#f0f0f0" stroke="#707070" stroke-width="1.2" rx="2.5" /><line x1="1885.2" y1="213.2" x2="1891.8" y2="219.3" stroke="#4a4a4a" stroke-width="2" /><line x1="1891.8" y1="213.2" x2="1885.2" y2="219.3" stroke="#4a4a4a" stroke-width="2" /></svg></body></html>
